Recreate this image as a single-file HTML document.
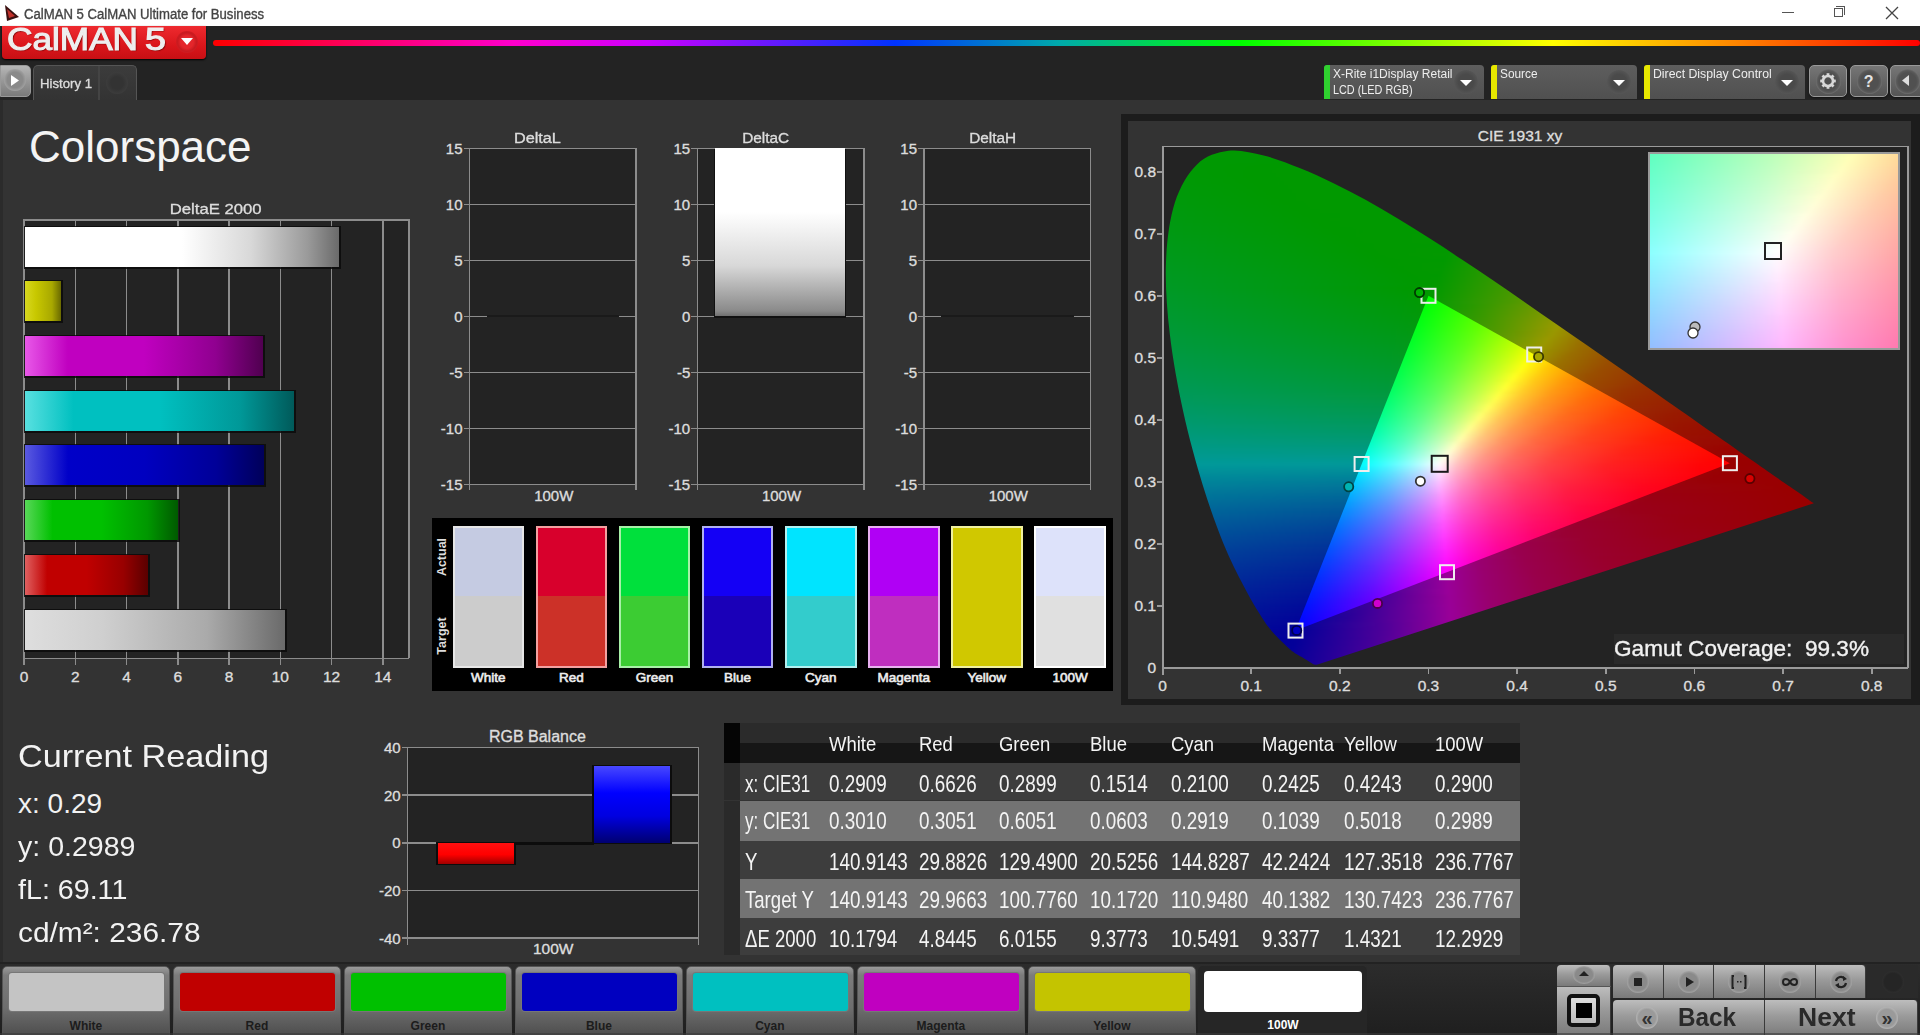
<!DOCTYPE html><html><head><meta charset="utf-8"><style>
*{margin:0;padding:0;box-sizing:border-box}
html,body{width:1920px;height:1035px;overflow:hidden;background:#333;font-family:"Liberation Sans",sans-serif}
.t{position:absolute;white-space:nowrap}
.sb{-webkit-text-stroke:0.35px currentColor}
.sb2{-webkit-text-stroke:0.6px currentColor}
.b{position:absolute}
.rows i{position:absolute;left:0;height:3px;width:100%;display:block}
</style></head><body>
<div class="b" style="left:0.0px;top:0.0px;width:1920.0px;height:26.0px;background:#fff"></div><svg class="b" style="left:3px;top:4px" width="17" height="18" viewBox="0 0 17 18"><path d="M2,1 L16,13 L4,17 Z" fill="#3a1010"/><path d="M4,5 L12,12 L6,14 Z" fill="#c0302a"/></svg><div class="t sb" style="left:24.0px;top:6.7px;font-size:14.0px;line-height:14.0px;color:#444;font-weight:400;transform:scaleX(0.938);transform-origin:0 0;">CalMAN 5 CalMAN Ultimate for Business</div><div class="b" style="left:1782.0px;top:12.0px;width:12.0px;height:1.0px;background:#555"></div><div class="b" style="left:1834px;top:8px;width:9px;height:9px;border:1px solid #555"></div><div class="b" style="left:1836px;top:6px;width:9px;height:9px;border-top:1px solid #555;border-right:1px solid #555"></div><svg class="b" style="left:1885px;top:6px" width="14" height="14"><path d="M1,1 L13,13 M13,1 L1,13" stroke="#444" stroke-width="1.3"/></svg><div class="b" style="left:0.0px;top:26.0px;width:1920.0px;height:74.0px;background:#232323"></div><div class="b" style="left:2.0px;top:26.0px;width:204.0px;height:33.0px;background:linear-gradient(#ee2a2f,#d9161b 60%,#c80f14);border-radius:0 0 4px 4px;box-shadow:0 1px 2px #000"></div><div class="t" style="left:7.0px;top:24.4px;font-size:31.8px;line-height:31.8px;color:#eee;font-weight:400;transform:scaleX(1.107);transform-origin:0 0;-webkit-text-stroke:1.1px #eee;text-shadow:1px 1px 1px #700">CalMAN</div><div class="t" style="left:145.0px;top:24.4px;font-size:31.8px;line-height:31.8px;color:#eee;font-weight:400;transform:scaleX(1.187);transform-origin:0 0;-webkit-text-stroke:1.1px #eee;text-shadow:1px 1px 1px #700">5</div><div class="b" style="left:176px;top:31px;width:22px;height:22px;border-radius:50%;background:radial-gradient(#e4262b 40%,#c91a1f 60%,#e02227)"></div><svg class="b" style="left:181px;top:38px" width="12" height="8"><path d="M0,0 L12,0 L6,7Z" fill="#fff"/></svg><div class="b" style="left:213.0px;top:40.0px;width:1707.0px;height:6.0px;background:linear-gradient(90deg,#f00 0px,#f0c 300px,#c0f 435px,#03f 682px,#0aa 847px,#0f0 1027px,#ff0 1340px,#f80 1520px,#f00 1707px);border-radius:3px"></div><div class="b" style="left:0.0px;top:65.0px;width:31.0px;height:32.0px;background:linear-gradient(#b5b5b5,#7a7a7a);border-radius:0 5px 5px 0;border:1px solid #999"></div><div class="b" style="left:4px;top:69px;width:22px;height:22px;border-radius:50%;background:radial-gradient(#8a8a8a 50%,#a0a0a0 70%)"></div><svg class="b" style="left:11px;top:75px" width="8" height="11"><path d="M0,0 L8,5.5 L0,11Z" fill="#fff"/></svg><div class="b" style="left:33.0px;top:65.0px;width:104.0px;height:35.0px;background:linear-gradient(#3c3c3c,#333);border:1px solid #555;border-bottom:none;border-radius:5px 5px 0 0"></div><div class="b" style="left:98.0px;top:66.0px;width:2.0px;height:34.0px;background:#444"></div><div class="t sb" style="left:40.0px;top:76.6px;font-size:13.5px;line-height:13.5px;color:#ddd;font-weight:400;transform:scaleX(0.976);transform-origin:0 0;">History 1</div><div class="b" style="left:106px;top:72px;width:22px;height:22px;border-radius:50%;background:radial-gradient(#333 40%,#3c3c3c 70%)"></div><div class="b" style="left:1324.0px;top:65.0px;width:160.0px;height:34.0px;background:linear-gradient(#5e5e5e,#505050);border-radius:4px 4px 0 0"></div><div class="b" style="left:1324.0px;top:65.0px;width:6.0px;height:34.0px;background:#2fd02f;border-radius:3px 0 0 0"></div><div class="t" style="left:1333.0px;top:67.8px;font-size:12.5px;line-height:12.5px;color:#eee;font-weight:400;transform:scaleX(0.961);transform-origin:0 0;">X-Rite i1Display Retail</div><div class="t" style="left:1333.0px;top:83.9px;font-size:12.5px;line-height:12.5px;color:#eee;font-weight:400;transform:scaleX(0.867);transform-origin:0 0;">LCD (LED RGB)</div><div class="b" style="left:1454px;top:70px;width:24px;height:24px;border-radius:50%;background:radial-gradient(#4a4a4a 45%,#555 70%,#5a5a5a)"></div><svg class="b" style="left:1460px;top:80px" width="12" height="7"><path d="M0,0 L12,0 L6,6Z" fill="#fff"/></svg><div class="b" style="left:1491.0px;top:65.0px;width:146.0px;height:34.0px;background:linear-gradient(#5e5e5e,#505050);border-radius:4px 4px 0 0"></div><div class="b" style="left:1491.0px;top:65.0px;width:6.0px;height:34.0px;background:#e8e800;border-radius:3px 0 0 0"></div><div class="t" style="left:1500.0px;top:67.8px;font-size:12.5px;line-height:12.5px;color:#eee;font-weight:400;transform:scaleX(0.947);transform-origin:0 0;">Source</div><div class="b" style="left:1607px;top:70px;width:24px;height:24px;border-radius:50%;background:radial-gradient(#4a4a4a 45%,#555 70%,#5a5a5a)"></div><svg class="b" style="left:1613px;top:80px" width="12" height="7"><path d="M0,0 L12,0 L6,6Z" fill="#fff"/></svg><div class="b" style="left:1644.0px;top:65.0px;width:161.0px;height:34.0px;background:linear-gradient(#5e5e5e,#505050);border-radius:4px 4px 0 0"></div><div class="b" style="left:1644.0px;top:65.0px;width:6.0px;height:34.0px;background:#e8e800;border-radius:3px 0 0 0"></div><div class="t" style="left:1653.0px;top:67.8px;font-size:12.5px;line-height:12.5px;color:#eee;font-weight:400;transform:scaleX(0.982);transform-origin:0 0;">Direct Display Control</div><div class="b" style="left:1775px;top:70px;width:24px;height:24px;border-radius:50%;background:radial-gradient(#4a4a4a 45%,#555 70%,#5a5a5a)"></div><svg class="b" style="left:1781px;top:80px" width="12" height="7"><path d="M0,0 L12,0 L6,6Z" fill="#fff"/></svg><div class="b" style="left:1809.0px;top:65.0px;width:38.0px;height:32.0px;background:linear-gradient(#767676,#555);border-radius:5px;border:1.5px solid #999;box-shadow:0 1px 2px #111"></div><div class="b" style="left:1815.5px;top:69px;width:25px;height:25px;border-radius:50%;background:radial-gradient(#505050 50%,#5a5a5a 62%,#7a7a7a 75%,rgba(120,120,120,0) 80%)"></div><div class="b" style="left:1850.0px;top:65.0px;width:38.0px;height:32.0px;background:linear-gradient(#767676,#555);border-radius:5px;border:1.5px solid #999;box-shadow:0 1px 2px #111"></div><div class="b" style="left:1856.5px;top:69px;width:25px;height:25px;border-radius:50%;background:radial-gradient(#505050 50%,#5a5a5a 62%,#7a7a7a 75%,rgba(120,120,120,0) 80%)"></div><div class="b" style="left:1890.0px;top:65.0px;width:35.0px;height:32.0px;background:linear-gradient(#767676,#555);border-radius:5px;border:1.5px solid #999;box-shadow:0 1px 2px #111"></div><div class="b" style="left:1895.0px;top:69px;width:25px;height:25px;border-radius:50%;background:radial-gradient(#505050 50%,#5a5a5a 62%,#7a7a7a 75%,rgba(120,120,120,0) 80%)"></div><svg class="b" style="left:1816px;top:69px" width="24" height="24" viewBox="-12 -12 24 24"><g fill="#d8d8d8"><rect x="-1.4" y="-7.8" width="2.8" height="3.5" transform="rotate(0)"/><rect x="-1.4" y="-7.8" width="2.8" height="3.5" transform="rotate(45)"/><rect x="-1.4" y="-7.8" width="2.8" height="3.5" transform="rotate(90)"/><rect x="-1.4" y="-7.8" width="2.8" height="3.5" transform="rotate(135)"/><rect x="-1.4" y="-7.8" width="2.8" height="3.5" transform="rotate(180)"/><rect x="-1.4" y="-7.8" width="2.8" height="3.5" transform="rotate(225)"/><rect x="-1.4" y="-7.8" width="2.8" height="3.5" transform="rotate(270)"/><rect x="-1.4" y="-7.8" width="2.8" height="3.5" transform="rotate(315)"/></g><circle r="5" fill="none" stroke="#d8d8d8" stroke-width="2.6"/></svg><div class="t" style="left:1863.7px;top:74.0px;font-size:16.0px;line-height:16.0px;color:#e4e4e4;font-weight:700;">?</div><svg class="b" style="left:1902px;top:74.5px" width="7" height="12"><path d="M7,0 L0,5.5 L7,11Z" fill="#ddd"/></svg><div class="b" style="left:0.0px;top:100.0px;width:1920.0px;height:863.0px;background:#333"></div><div class="b" style="left:0.0px;top:100.0px;width:3.0px;height:863.0px;background:#2b2b2b"></div><div class="t" style="left:29.0px;top:125.1px;font-size:44.0px;line-height:44.0px;color:#f4f4f4;font-weight:400;">Colorspace</div><div class="t sb" style="left:173.3px;top:201.4px;font-size:15.5px;line-height:15.5px;color:#ddd;font-weight:400;transform:scaleX(1.078);transform-origin:50% 0;">DeltaE 2000</div><div class="b" style="left:24.0px;top:220.0px;width:384.8px;height:438.5px;background:#232323"></div><div class="b" style="left:23.2px;top:220.0px;width:1.5px;height:444.5px;background:#8c8c8c"></div><div class="t sb" style="left:19.7px;top:668.7px;font-size:15.5px;line-height:15.5px;color:#ddd;font-weight:400;">0</div><div class="b" style="left:74.5px;top:220.0px;width:1.5px;height:444.5px;background:#8c8c8c"></div><div class="t sb" style="left:70.9px;top:668.7px;font-size:15.5px;line-height:15.5px;color:#ddd;font-weight:400;">2</div><div class="b" style="left:125.8px;top:220.0px;width:1.5px;height:444.5px;background:#8c8c8c"></div><div class="t sb" style="left:122.2px;top:668.7px;font-size:15.5px;line-height:15.5px;color:#ddd;font-weight:400;">4</div><div class="b" style="left:177.0px;top:220.0px;width:1.5px;height:444.5px;background:#8c8c8c"></div><div class="t sb" style="left:173.5px;top:668.7px;font-size:15.5px;line-height:15.5px;color:#ddd;font-weight:400;">6</div><div class="b" style="left:228.3px;top:220.0px;width:1.5px;height:444.5px;background:#8c8c8c"></div><div class="t sb" style="left:224.7px;top:668.7px;font-size:15.5px;line-height:15.5px;color:#ddd;font-weight:400;">8</div><div class="b" style="left:279.5px;top:220.0px;width:1.5px;height:444.5px;background:#8c8c8c"></div><div class="t sb" style="left:271.7px;top:668.7px;font-size:15.5px;line-height:15.5px;color:#ddd;font-weight:400;">10</div><div class="b" style="left:330.8px;top:220.0px;width:1.5px;height:444.5px;background:#8c8c8c"></div><div class="t sb" style="left:322.9px;top:668.7px;font-size:15.5px;line-height:15.5px;color:#ddd;font-weight:400;">12</div><div class="b" style="left:382.1px;top:220.0px;width:1.5px;height:444.5px;background:#8c8c8c"></div><div class="t sb" style="left:374.2px;top:668.7px;font-size:15.5px;line-height:15.5px;color:#ddd;font-weight:400;">14</div><div class="b" style="left:23.2px;top:219.2px;width:386.3px;height:1.5px;background:#8c8c8c"></div><div class="b" style="left:408.1px;top:219.2px;width:1.5px;height:439.2px;background:#8c8c8c"></div><div class="b" style="left:23.2px;top:657.8px;width:386.3px;height:1.5px;background:#8c8c8c"></div><div class="b" style="left:24.0px;top:225.5px;width:317.0px;height:43.0px;background:#0a0a0a;opacity:.85"></div><div class="b" style="left:24.8px;top:227.0px;width:314.3px;height:40.0px;background:linear-gradient(90deg,#fff 0%,#fff 50%,#d8d8d8 72%,#9a9a9a 90%,#6a6a6a 100%)"></div><div class="b" style="left:24.0px;top:279.5px;width:38.7px;height:43.0px;background:#0a0a0a;opacity:.85"></div><div class="b" style="left:24.8px;top:281.0px;width:36.0px;height:40.0px;background:linear-gradient(90deg,#d8d820 0%,#c8c800 30%,#a8a800 75%,#6a6a00 100%)"></div><div class="b" style="left:24.0px;top:334.5px;width:241.3px;height:43.0px;background:#0a0a0a;opacity:.85"></div><div class="b" style="left:24.8px;top:336.0px;width:238.6px;height:40.0px;background:linear-gradient(90deg,#e858e8 0%,#c000c0 18%,#c000c0 50%,#900090 80%,#500050 100%)"></div><div class="b" style="left:24.0px;top:389.5px;width:272.4px;height:43.0px;background:#0a0a0a;opacity:.85"></div><div class="b" style="left:24.8px;top:391.0px;width:269.6px;height:40.0px;background:linear-gradient(90deg,#58e0e0 0%,#00c0c0 18%,#00c0c0 50%,#009898 80%,#005a5a 100%)"></div><div class="b" style="left:24.0px;top:443.5px;width:242.3px;height:43.0px;background:#0a0a0a;opacity:.85"></div><div class="b" style="left:24.8px;top:445.0px;width:239.6px;height:40.0px;background:linear-gradient(90deg,#5a5ae0 0%,#0000c8 18%,#0000c0 50%,#000098 80%,#00005a 100%)"></div><div class="b" style="left:24.0px;top:498.5px;width:156.2px;height:43.0px;background:#0a0a0a;opacity:.85"></div><div class="b" style="left:24.8px;top:500.0px;width:153.4px;height:40.0px;background:linear-gradient(90deg,#58d858 0%,#00c000 18%,#00c000 50%,#009800 80%,#005a00 100%)"></div><div class="b" style="left:24.0px;top:553.5px;width:126.2px;height:43.0px;background:#0a0a0a;opacity:.85"></div><div class="b" style="left:24.8px;top:555.0px;width:123.4px;height:40.0px;background:linear-gradient(90deg,#e06060 0%,#c00000 18%,#c00000 50%,#980000 80%,#5a0000 100%)"></div><div class="b" style="left:24.0px;top:608.5px;width:262.9px;height:43.0px;background:#0a0a0a;opacity:.85"></div><div class="b" style="left:24.8px;top:610.0px;width:260.1px;height:40.0px;background:linear-gradient(90deg,#dedede 0%,#cfcfcf 30%,#aaaaaa 70%,#6a6a6a 100%)"></div><div class="t sb" style="left:515.3px;top:130.1px;font-size:15.5px;line-height:15.5px;color:#ddd;font-weight:400;transform:scaleX(1.049);transform-origin:50% 0;">DeltaL</div><div class="b" style="left:469.5px;top:148.3px;width:166.5px;height:336.2px;background:#232323"></div><div class="b" style="left:463.5px;top:147.6px;width:172.5px;height:1.5px;background:#8c8c8c"></div><div class="t sb" style="left:445.8px;top:140.8px;font-size:15.0px;line-height:15.0px;color:#ddd;font-weight:400;">15</div><div class="b" style="left:463.5px;top:203.6px;width:172.5px;height:1.5px;background:#8c8c8c"></div><div class="t sb" style="left:445.8px;top:196.8px;font-size:15.0px;line-height:15.0px;color:#ddd;font-weight:400;">10</div><div class="b" style="left:463.5px;top:259.6px;width:172.5px;height:1.5px;background:#8c8c8c"></div><div class="t sb" style="left:454.2px;top:252.9px;font-size:15.0px;line-height:15.0px;color:#ddd;font-weight:400;">5</div><div class="b" style="left:463.5px;top:315.6px;width:172.5px;height:1.5px;background:#8c8c8c"></div><div class="t sb" style="left:454.2px;top:308.9px;font-size:15.0px;line-height:15.0px;color:#ddd;font-weight:400;">0</div><div class="b" style="left:463.5px;top:371.7px;width:172.5px;height:1.5px;background:#8c8c8c"></div><div class="t sb" style="left:449.2px;top:364.9px;font-size:15.0px;line-height:15.0px;color:#ddd;font-weight:400;">-5</div><div class="b" style="left:463.5px;top:427.7px;width:172.5px;height:1.5px;background:#8c8c8c"></div><div class="t sb" style="left:440.8px;top:421.0px;font-size:15.0px;line-height:15.0px;color:#ddd;font-weight:400;">-10</div><div class="b" style="left:463.5px;top:483.8px;width:172.5px;height:1.5px;background:#8c8c8c"></div><div class="t sb" style="left:440.8px;top:477.0px;font-size:15.0px;line-height:15.0px;color:#ddd;font-weight:400;">-15</div><div class="b" style="left:468.8px;top:147.6px;width:1.5px;height:342.9px;background:#8c8c8c"></div><div class="b" style="left:635.2px;top:147.6px;width:1.5px;height:342.9px;background:#8c8c8c"></div><div class="t sb" style="left:534.2px;top:487.8px;font-size:15.0px;line-height:15.0px;color:#ddd;font-weight:400;">100W</div><div class="b" style="left:486.5px;top:315.4px;width:132.5px;height:2.0px;background:#1a1a1a"></div><div class="t sb" style="left:741.8px;top:130.1px;font-size:15.5px;line-height:15.5px;color:#ddd;font-weight:400;transform:scaleX(0.992);transform-origin:50% 0;">DeltaC</div><div class="b" style="left:697.2px;top:148.3px;width:166.5px;height:336.2px;background:#232323"></div><div class="b" style="left:691.2px;top:147.6px;width:172.5px;height:1.5px;background:#8c8c8c"></div><div class="t sb" style="left:673.5px;top:140.8px;font-size:15.0px;line-height:15.0px;color:#ddd;font-weight:400;">15</div><div class="b" style="left:691.2px;top:203.6px;width:172.5px;height:1.5px;background:#8c8c8c"></div><div class="t sb" style="left:673.5px;top:196.8px;font-size:15.0px;line-height:15.0px;color:#ddd;font-weight:400;">10</div><div class="b" style="left:691.2px;top:259.6px;width:172.5px;height:1.5px;background:#8c8c8c"></div><div class="t sb" style="left:681.9px;top:252.9px;font-size:15.0px;line-height:15.0px;color:#ddd;font-weight:400;">5</div><div class="b" style="left:691.2px;top:315.6px;width:172.5px;height:1.5px;background:#8c8c8c"></div><div class="t sb" style="left:681.9px;top:308.9px;font-size:15.0px;line-height:15.0px;color:#ddd;font-weight:400;">0</div><div class="b" style="left:691.2px;top:371.7px;width:172.5px;height:1.5px;background:#8c8c8c"></div><div class="t sb" style="left:676.9px;top:364.9px;font-size:15.0px;line-height:15.0px;color:#ddd;font-weight:400;">-5</div><div class="b" style="left:691.2px;top:427.7px;width:172.5px;height:1.5px;background:#8c8c8c"></div><div class="t sb" style="left:668.5px;top:421.0px;font-size:15.0px;line-height:15.0px;color:#ddd;font-weight:400;">-10</div><div class="b" style="left:691.2px;top:483.8px;width:172.5px;height:1.5px;background:#8c8c8c"></div><div class="t sb" style="left:668.5px;top:477.0px;font-size:15.0px;line-height:15.0px;color:#ddd;font-weight:400;">-15</div><div class="b" style="left:696.5px;top:147.6px;width:1.5px;height:342.9px;background:#8c8c8c"></div><div class="b" style="left:863.0px;top:147.6px;width:1.5px;height:342.9px;background:#8c8c8c"></div><div class="t sb" style="left:761.9px;top:487.8px;font-size:15.0px;line-height:15.0px;color:#ddd;font-weight:400;">100W</div><div class="b" style="left:714.2px;top:148.8px;width:132.0px;height:169.1px;background:#111"></div><div class="b" style="left:714.7px;top:148.3px;width:130.5px;height:168.1px;background:linear-gradient(#fff 0%,#fff 38%,#d8d8d8 70%,#8a8a8a 97%,#707070 100%)"></div><div class="t sb" style="left:968.6px;top:130.1px;font-size:15.5px;line-height:15.5px;color:#ddd;font-weight:400;transform:scaleX(0.992);transform-origin:50% 0;">DeltaH</div><div class="b" style="left:924.0px;top:148.3px;width:166.5px;height:336.2px;background:#232323"></div><div class="b" style="left:918.0px;top:147.6px;width:172.5px;height:1.5px;background:#8c8c8c"></div><div class="t sb" style="left:900.3px;top:140.8px;font-size:15.0px;line-height:15.0px;color:#ddd;font-weight:400;">15</div><div class="b" style="left:918.0px;top:203.6px;width:172.5px;height:1.5px;background:#8c8c8c"></div><div class="t sb" style="left:900.3px;top:196.8px;font-size:15.0px;line-height:15.0px;color:#ddd;font-weight:400;">10</div><div class="b" style="left:918.0px;top:259.6px;width:172.5px;height:1.5px;background:#8c8c8c"></div><div class="t sb" style="left:908.7px;top:252.9px;font-size:15.0px;line-height:15.0px;color:#ddd;font-weight:400;">5</div><div class="b" style="left:918.0px;top:315.6px;width:172.5px;height:1.5px;background:#8c8c8c"></div><div class="t sb" style="left:908.7px;top:308.9px;font-size:15.0px;line-height:15.0px;color:#ddd;font-weight:400;">0</div><div class="b" style="left:918.0px;top:371.7px;width:172.5px;height:1.5px;background:#8c8c8c"></div><div class="t sb" style="left:903.7px;top:364.9px;font-size:15.0px;line-height:15.0px;color:#ddd;font-weight:400;">-5</div><div class="b" style="left:918.0px;top:427.7px;width:172.5px;height:1.5px;background:#8c8c8c"></div><div class="t sb" style="left:895.3px;top:421.0px;font-size:15.0px;line-height:15.0px;color:#ddd;font-weight:400;">-10</div><div class="b" style="left:918.0px;top:483.8px;width:172.5px;height:1.5px;background:#8c8c8c"></div><div class="t sb" style="left:895.3px;top:477.0px;font-size:15.0px;line-height:15.0px;color:#ddd;font-weight:400;">-15</div><div class="b" style="left:923.2px;top:147.6px;width:1.5px;height:342.9px;background:#8c8c8c"></div><div class="b" style="left:1089.8px;top:147.6px;width:1.5px;height:342.9px;background:#8c8c8c"></div><div class="t sb" style="left:988.7px;top:487.8px;font-size:15.0px;line-height:15.0px;color:#ddd;font-weight:400;">100W</div><div class="b" style="left:941.0px;top:315.4px;width:132.5px;height:2.0px;background:#1a1a1a"></div><div class="b" style="left:432.3px;top:518.3px;width:681.0px;height:172.7px;background:#000"></div><div class="t" style="left:435.4px;top:577px;font-size:12.5px;line-height:14px;color:#ddd;font-weight:700;transform:rotate(-90deg);transform-origin:0 0;width:40px;text-align:center;">Actual</div><div class="t" style="left:435.4px;top:656px;font-size:12.5px;line-height:14px;color:#ddd;font-weight:700;transform:rotate(-90deg);transform-origin:0 0;width:40px;text-align:center;">Target</div><div class="b" style="left:452.5px;top:526.2px;width:71.7px;height:141.4px;background:linear-gradient(#c5cbe2 0,#c5cbe2 49.5%,#cccccc 49.5%,#cccccc 100%);border:2px solid #e6e6e6"></div><div class="t sb2" style="left:471.0px;top:671.2px;font-size:13.5px;line-height:13.5px;color:#eee;font-weight:400;">White</div><div class="b" style="left:535.6px;top:526.2px;width:71.7px;height:141.4px;background:linear-gradient(#d8002c 0,#d8002c 49.5%,#cc3128 49.5%,#cc3128 100%);border:2px solid #f2a0a0"></div><div class="t sb2" style="left:559.0px;top:671.2px;font-size:13.5px;line-height:13.5px;color:#eee;font-weight:400;">Red</div><div class="b" style="left:618.7px;top:526.2px;width:71.7px;height:141.4px;background:linear-gradient(#00e03c 0,#00e03c 49.5%,#3ccc33 49.5%,#3ccc33 100%);border:2px solid #a8f0a8"></div><div class="t sb2" style="left:635.7px;top:671.2px;font-size:13.5px;line-height:13.5px;color:#eee;font-weight:400;">Green</div><div class="b" style="left:701.8px;top:526.2px;width:71.7px;height:141.4px;background:linear-gradient(#1400f5 0,#1400f5 49.5%,#1a00b8 49.5%,#1a00b8 100%);border:2px solid #b0b0f0"></div><div class="t sb2" style="left:724.1px;top:671.2px;font-size:13.5px;line-height:13.5px;color:#eee;font-weight:400;">Blue</div><div class="b" style="left:784.9px;top:526.2px;width:71.7px;height:141.4px;background:linear-gradient(#00e4ff 0,#00e4ff 49.5%,#33cccc 49.5%,#33cccc 100%);border:2px solid #b0f0f0"></div><div class="t sb2" style="left:804.9px;top:671.2px;font-size:13.5px;line-height:13.5px;color:#eee;font-weight:400;">Cyan</div><div class="b" style="left:868.0px;top:526.2px;width:71.7px;height:141.4px;background:linear-gradient(#b000f5 0,#b000f5 49.5%,#bf2ebf 49.5%,#bf2ebf 100%);border:2px solid #e8b0f0"></div><div class="t sb2" style="left:877.5px;top:671.2px;font-size:13.5px;line-height:13.5px;color:#eee;font-weight:400;">Magenta</div><div class="b" style="left:951.1px;top:526.2px;width:71.7px;height:141.4px;background:linear-gradient(#d0c800 0,#d0c800 49.5%,#d0c800 49.5%,#d0c800 100%);border:2px solid #f0f0a0"></div><div class="t sb2" style="left:967.6px;top:671.2px;font-size:13.5px;line-height:13.5px;color:#eee;font-weight:400;">Yellow</div><div class="b" style="left:1034.2px;top:526.2px;width:71.7px;height:141.4px;background:linear-gradient(#dde2fa 0,#dde2fa 49.5%,#e0e0e0 49.5%,#e0e0e0 100%);border:2px solid #ffffff"></div><div class="t sb2" style="left:1052.4px;top:671.2px;font-size:13.5px;line-height:13.5px;color:#eee;font-weight:400;">100W</div><div class="b" style="left:1121.0px;top:114.0px;width:799.0px;height:591.0px;background:#1c1c1c"></div><div class="b" style="left:1128.0px;top:121.0px;width:783.0px;height:577.5px;background:#333"></div><div class="t sb" style="left:1477.8px;top:127.9px;font-size:15.5px;line-height:15.5px;color:#ddd;font-weight:400;">CIE 1931 xy</div><div class="b" style="left:1163.0px;top:146.6px;width:744.8px;height:521.2px;background:#232323"></div><div class="b" style="left:1160px;top:145px;width:660px;height:525px;clip-path:path('M156.8,519.7 C156.7,519.7 156.5,519.8 156.1,519.8 C155.7,519.8 155.1,519.9 154.4,519.6 C153.8,519.4 153.3,519.1 152.2,518.5 C151.2,517.9 150.1,517.2 148.2,516.0 C146.4,514.9 144.3,513.8 141.3,511.8 C138.3,509.9 135.0,508.5 130.2,504.4 C125.4,500.2 117.6,492.9 112.5,487.0 C107.4,481.1 104.5,476.7 99.7,469.0 C94.8,461.2 89.5,452.3 83.4,440.5 C77.4,428.8 70.2,415.1 63.4,398.4 C56.6,381.6 49.4,361.8 42.7,339.9 C36.1,318.0 28.8,292.1 23.3,266.9 C17.8,241.8 12.7,214.0 9.8,189.0 C6.9,164.0 5.1,138.7 6.0,116.8 C6.8,94.9 9.7,73.9 14.8,57.7 C20.0,41.4 28.1,28.0 37.0,19.4 C45.9,10.7 57.2,7.3 68.4,5.8 C79.5,4.4 91.9,7.7 103.7,10.6 C115.6,13.4 128.0,18.5 139.6,23.1 C151.3,27.8 162.4,32.9 173.5,38.2 C184.6,43.5 195.3,49.2 206.0,55.1 C216.8,61.1 227.5,67.3 238.1,73.7 C248.8,80.1 259.3,86.8 269.9,93.6 C280.4,100.3 291.0,107.3 301.5,114.3 C312.1,121.3 322.7,128.4 333.3,135.6 C343.8,142.8 354.3,150.0 364.8,157.2 C375.3,164.5 385.8,171.7 396.2,178.9 C406.6,186.1 416.9,193.2 427.0,200.3 C437.1,207.3 447.1,214.3 456.8,221.1 C466.6,227.9 476.2,234.6 485.5,241.1 C494.7,247.5 503.8,253.8 512.4,259.8 C521.0,265.8 529.3,271.6 537.0,277.0 C544.6,282.3 551.6,287.2 558.3,291.8 C565.0,296.5 571.4,301.0 577.1,304.9 C582.9,308.9 586.3,311.3 592.7,315.7 C599.1,320.2 609.3,327.3 615.5,331.7 C621.7,336.0 626.0,338.9 630.1,341.8 C634.1,344.6 637.2,346.8 639.9,348.6 C642.6,350.5 644.5,351.8 646.1,352.9 C647.7,354.0 648.6,354.6 649.6,355.4 C650.7,356.2 652.0,357.0 652.7,357.5 C653.4,358.0 653.6,358.2 653.8,358.3Z')"><div class="b rows" style="left:0;top:0;width:660px;height:525px;filter:blur(1.5px)"><i style="top:-3px;background:linear-gradient(90deg,#009900 0px,#029900 332px,#4f9900 460px,#999800 558px,#996f00 620px,#995d00 658px,#995d00 659px)"></i><i style="top:0px;background:linear-gradient(90deg,#009900 0px,#019900 330px,#4f9900 458px,#999700 556px,#996e00 618px,#995c00 658px,#995b00 659px)"></i><i style="top:3px;background:linear-gradient(90deg,#009900 0px,#029900 330px,#4f9900 456px,#999700 554px,#996d00 616px,#995a00 658px,#995a00 659px)"></i><i style="top:6px;background:linear-gradient(90deg,#009901 0px,#029900 328px,#4f9900 454px,#999800 550px,#996f00 610px,#995900 658px,#995900 659px)"></i><i style="top:9px;background:linear-gradient(90deg,#009902 0px,#029900 328px,#4f9900 452px,#999700 548px,#996f00 608px,#995800 658px,#995700 659px)"></i><i style="top:12px;background:linear-gradient(90deg,#009902 0px,#029900 326px,#4f9900 450px,#999700 546px,#996e00 606px,#995700 658px,#995600 659px)"></i><i style="top:15px;background:linear-gradient(90deg,#009903 0px,#009900 182px,#019900 324px,#4f9900 448px,#999800 542px,#996f00 602px,#995500 658px,#995500 659px)"></i><i style="top:18px;background:linear-gradient(90deg,#009904 0px,#009900 106px,#029900 324px,#4f9900 446px,#999700 540px,#996e00 600px,#995400 658px,#995400 659px)"></i><i style="top:21px;background:linear-gradient(90deg,#009904 0px,#009900 90px,#029900 322px,#4f9900 444px,#999700 538px,#996d00 598px,#995300 658px,#995200 659px)"></i><i style="top:24px;background:linear-gradient(90deg,#009905 0px,#009900 88px,#029900 322px,#4f9900 442px,#999800 534px,#996f00 592px,#995200 658px,#995100 659px)"></i><i style="top:27px;background:linear-gradient(90deg,#009905 0px,#009900 88px,#029900 320px,#4f9900 440px,#999700 532px,#996f00 590px,#995000 658px,#995000 659px)"></i><i style="top:30px;background:linear-gradient(90deg,#009906 0px,#009900 88px,#029900 318px,#4f9900 438px,#999700 530px,#996e00 588px,#994f00 658px,#994f00 659px)"></i><i style="top:33px;background:linear-gradient(90deg,#009907 0px,#009900 92px,#029900 318px,#4f9900 436px,#999800 526px,#997000 582px,#994e00 658px,#994e00 659px)"></i><i style="top:36px;background:linear-gradient(90deg,#009907 0px,#009900 96px,#029900 316px,#4f9900 434px,#999800 524px,#996f00 580px,#994d00 658px,#994c00 659px)"></i><i style="top:39px;background:linear-gradient(90deg,#009908 0px,#009900 100px,#029900 316px,#4f9900 432px,#999700 522px,#996f00 578px,#994c00 658px,#994b00 659px)"></i><i style="top:42px;background:linear-gradient(90deg,#009909 0px,#009900 104px,#029900 314px,#4f9900 430px,#999700 520px,#996e00 576px,#994a00 658px,#994a00 659px)"></i><i style="top:45px;background:linear-gradient(90deg,#00990a 0px,#009900 108px,#029900 312px,#4f9900 428px,#999800 516px,#996f00 572px,#994a00 654px,#994900 659px)"></i><i style="top:48px;background:linear-gradient(90deg,#00990a 0px,#009900 112px,#029900 312px,#4f9900 426px,#999700 514px,#996e00 570px,#994a00 652px,#994800 659px)"></i><i style="top:51px;background:linear-gradient(90deg,#00990b 0px,#009900 116px,#029900 310px,#4f9900 424px,#999700 512px,#996d00 568px,#994900 650px,#994700 658px,#994600 659px)"></i><i style="top:54px;background:linear-gradient(90deg,#00990c 0px,#009900 122px,#039900 310px,#4f9900 422px,#999800 508px,#996f00 562px,#994b00 642px,#994600 658px,#994500 659px)"></i><i style="top:57px;background:linear-gradient(90deg,#00990c 0px,#009900 126px,#029900 308px,#4f9900 420px,#999700 506px,#996f00 560px,#994a00 640px,#994500 658px,#994400 659px)"></i><i style="top:60px;background:linear-gradient(90deg,#00990d 0px,#009900 132px,#029900 306px,#4f9900 418px,#999700 504px,#996e00 558px,#994a00 638px,#994300 658px,#994300 659px)"></i><i style="top:63px;background:linear-gradient(90deg,#00990e 0px,#009900 136px,#029900 306px,#4f9900 416px,#999800 500px,#997000 552px,#994b00 630px,#994200 658px,#994200 659px)"></i><i style="top:66px;background:linear-gradient(90deg,#00990f 0px,#009900 142px,#029900 304px,#4f9900 414px,#999800 498px,#996f00 550px,#994b00 628px,#994100 658px,#994100 659px)"></i><i style="top:69px;background:linear-gradient(90deg,#00990f 0px,#009900 146px,#019900 302px,#4e9900 410px,#999700 496px,#996f00 548px,#994a00 626px,#994000 658px,#994000 659px)"></i><i style="top:72px;background:linear-gradient(90deg,#009910 0px,#009900 152px,#029900 302px,#4f9900 410px,#999600 494px,#996e00 546px,#994a00 624px,#993f00 658px,#993f00 659px)"></i><i style="top:75px;background:linear-gradient(90deg,#009911 0px,#009900 156px,#029900 300px,#4f9900 408px,#999800 490px,#996f00 542px,#994b00 618px,#993e00 658px,#993e00 659px)"></i><i style="top:78px;background:linear-gradient(90deg,#009912 0px,#009900 162px,#029900 300px,#4f9900 406px,#999700 488px,#996e00 540px,#994a00 616px,#993d00 658px,#993c00 659px)"></i><i style="top:81px;background:linear-gradient(90deg,#009913 0px,#009900 166px,#029900 298px,#4f9900 404px,#999700 486px,#996d00 538px,#994a00 614px,#993c00 658px,#993b00 659px)"></i><i style="top:84px;background:linear-gradient(90deg,#009913 0px,#009900 172px,#019900 296px,#4e9900 400px,#999800 482px,#996f00 532px,#994b00 606px,#993b00 658px,#993a00 659px)"></i><i style="top:87px;background:linear-gradient(90deg,#009914 0px,#009900 176px,#029900 296px,#4f9900 400px,#999700 480px,#996f00 530px,#994b00 604px,#993900 658px,#993900 659px)"></i><i style="top:90px;background:linear-gradient(90deg,#009915 0px,#009900 182px,#029900 294px,#4f9900 398px,#999700 478px,#996e00 528px,#994a00 602px,#993800 658px,#993800 659px)"></i><i style="top:93px;background:linear-gradient(90deg,#009916 0px,#009900 188px,#029900 294px,#4f9900 396px,#999800 474px,#996f00 524px,#994b00 596px,#993700 658px,#993700 659px)"></i><i style="top:96px;background:linear-gradient(90deg,#009917 0px,#009900 192px,#029900 292px,#4f9900 394px,#999800 472px,#996e00 522px,#994a00 594px,#993600 658px,#993600 659px)"></i><i style="top:99px;background:linear-gradient(90deg,#009918 0px,#009900 198px,#019900 290px,#4e9900 390px,#999700 470px,#996f00 518px,#994b00 590px,#993500 658px,#993500 659px)"></i><i style="top:102px;background:linear-gradient(90deg,#009919 0px,#009900 202px,#029900 290px,#4f9900 390px,#999800 466px,#996f00 514px,#994b00 584px,#993400 658px,#993400 659px)"></i><i style="top:105px;background:linear-gradient(90deg,#009919 0px,#009900 208px,#029900 288px,#4f9900 388px,#999800 464px,#996f00 512px,#994b00 582px,#993300 658px,#993300 659px)"></i><i style="top:108px;background:linear-gradient(90deg,#00991a 0px,#009900 214px,#039900 288px,#4f9900 386px,#999700 462px,#996e00 510px,#994a00 580px,#993200 658px,#993200 659px)"></i><i style="top:111px;background:linear-gradient(90deg,#00991b 0px,#009900 218px,#029900 286px,#4f9900 384px,#999600 460px,#996d00 508px,#994a00 578px,#993100 658px,#993100 659px)"></i><i style="top:114px;background:linear-gradient(90deg,#00991c 0px,#009900 224px,#019900 284px,#4e9900 380px,#999800 456px,#997000 502px,#994b00 570px,#993000 658px,#993000 659px)"></i><i style="top:117px;background:linear-gradient(90deg,#00991d 0px,#009900 228px,#029900 284px,#4f9900 380px,#999700 454px,#996f00 500px,#994b00 568px,#992f00 658px,#992f00 659px)"></i><i style="top:120px;background:linear-gradient(90deg,#00991e 0px,#009900 234px,#029900 282px,#4f9900 378px,#999700 452px,#996e00 498px,#994a00 566px,#992e00 658px,#992e00 659px)"></i><i style="top:123px;background:linear-gradient(90deg,#00991f 0px,#009900 240px,#039900 282px,#4f9900 376px,#999800 448px,#996f00 494px,#994a00 562px,#992d00 658px,#992d00 659px)"></i><i style="top:126px;background:linear-gradient(90deg,#009920 0px,#009900 244px,#029900 280px,#4f9900 374px,#999700 446px,#996e00 492px,#994b00 558px,#992c00 658px,#992c00 659px)"></i><i style="top:129px;background:linear-gradient(90deg,#009921 0px,#009900 250px,#019900 278px,#4d9900 370px,#999700 444px,#996d00 490px,#994a00 556px,#992b00 658px,#992b00 659px)"></i><i style="top:132px;background:linear-gradient(90deg,#009922 0px,#009900 254px,#029900 278px,#4f9900 370px,#999800 440px,#997000 484px,#994c00 548px,#992c00 648px,#992a00 658px,#992a00 659px)"></i><i style="top:135px;background:linear-gradient(90deg,#009923 0px,#009900 260px,#039900 278px,#4f9900 368px,#999800 438px,#996f00 482px,#994b00 546px,#992c00 646px,#992900 658px,#992900 659px)"></i><i style="top:138px;background:linear-gradient(90deg,#009924 0px,#009900 266px,#069900 280px,#539900 370px,#999700 436px,#996e00 480px,#994b00 544px,#992b00 644px,#992800 658px,#992800 659px)"></i><i style="top:141px;background:linear-gradient(90deg,#009925 0px,#009901 246px,#029900 274px,#4f9900 364px,#999900 432px,#997000 474px,#994c00 536px,#992d00 632px,#992700 658px,#992700 659px)"></i><i style="top:144px;background:linear-gradient(90deg,#009926 0px,#009902 246px,#019900 272px,#4d9900 360px,#999800 430px,#997000 472px,#994c00 534px,#992c00 632px,#992600 658px,#992600 659px)"></i><i style="top:147px;background:linear-gradient(90deg,#009928 0px,#009904 244px,#029900 272px,#4f9900 360px,#999700 428px,#996f00 470px,#994b00 532px,#992c00 630px,#992500 658px,#992500 659px)"></i><i style="top:150px;background:linear-gradient(90deg,#009929 0px,#009905 244px,#029900 270px,#4f9900 358px,#999600 426px,#996e00 468px,#994a00 530px,#992b00 628px,#992400 658px,#992400 659px)"></i><i style="top:153px;background:linear-gradient(90deg,#00992a 0px,#009907 242px,#039901 270px,#4f9900 356px,#999800 422px,#996f00 464px,#994b00 526px,#992b00 622px,#992400 658px,#992300 659px)"></i><i style="top:156px;background:linear-gradient(90deg,#00992b 0px,#009908 242px,#029903 268px,#4f9900 354px,#999700 420px,#996e00 462px,#994a00 524px,#992b00 620px,#992300 658px,#992200 659px)"></i><i style="top:159px;background:linear-gradient(90deg,#00992c 0px,#009909 240px,#029904 266px,#2c9900 316px,#7b9900 392px,#999700 418px,#996d00 460px,#994900 522px,#992a00 618px,#992200 658px,#992100 659px)"></i><i style="top:162px;background:linear-gradient(90deg,#00992d 0px,#00990b 240px,#029905 266px,#2a9900 312px,#799900 388px,#999800 414px,#997000 454px,#994b00 514px,#992c00 606px,#992100 658px,#992100 659px)"></i><i style="top:165px;background:linear-gradient(90deg,#00992f 0px,#00990c 240px,#029907 264px,#2e9900 314px,#7c9900 388px,#999800 412px,#996f00 452px,#994b00 512px,#992b00 604px,#992000 658px,#992000 659px)"></i><i style="top:168px;background:linear-gradient(90deg,#009930 0px,#00990d 238px,#039908 264px,#339900 318px,#849900 392px,#999700 410px,#996e00 450px,#994b00 508px,#992b00 600px,#991f00 658px,#991f00 659px)"></i><i style="top:171px;background:linear-gradient(90deg,#009931 0px,#00990f 238px,#02990a 262px,#399900 322px,#8a9900 394px,#999600 408px,#996e00 448px,#994a00 506px,#992b00 598px,#991e00 658px,#991e00 659px)"></i><i style="top:174px;background:linear-gradient(90deg,#009932 0px,#009910 236px,#02990c 260px,#3f9900 326px,#909900 396px,#999800 404px,#997000 442px,#994c00 498px,#992d00 586px,#991d00 658px,#991d00 659px)"></i><i style="top:177px;background:linear-gradient(90deg,#009934 0px,#009912 236px,#03990d 260px,#459900 330px,#969900 398px,#998f00 408px,#996700 450px,#994400 512px,#992600 610px,#991c00 658px,#991c00 659px)"></i><i style="top:180px;background:linear-gradient(90deg,#009935 0px,#009913 236px,#02990f 258px,#4d9900 336px,#999900 398px,#997000 436px,#994c00 492px,#992c00 578px,#991b00 658px,#991b00 659px)"></i><i style="top:183px;background:linear-gradient(90deg,#009936 0px,#009915 234px,#039910 258px,#4f9900 336px,#999800 396px,#996f00 434px,#994b00 490px,#992c00 576px,#991a00 658px,#991a00 659px)"></i><i style="top:186px;background:linear-gradient(90deg,#009938 0px,#009916 234px,#029912 256px,#4f9900 334px,#999700 394px,#996e00 432px,#994a00 488px,#992b00 574px,#991a00 658px,#991900 659px)"></i><i style="top:189px;background:linear-gradient(90deg,#009939 0px,#009918 234px,#029914 254px,#4f9902 332px,#999700 392px,#996e00 430px,#994900 486px,#992a00 574px,#991900 658px,#991900 659px)"></i><i style="top:192px;background:linear-gradient(90deg,#00993b 0px,#00991a 232px,#039916 254px,#4f9904 330px,#819900 370px,#999800 388px,#997000 424px,#994c00 478px,#992c00 562px,#991800 658px,#991800 659px)"></i><i style="top:195px;background:linear-gradient(90deg,#00993c 0px,#00991b 232px,#029918 252px,#4f9906 328px,#7f9900 366px,#999800 386px,#996f00 422px,#994b00 476px,#992b00 560px,#991700 658px,#991700 659px)"></i><i style="top:198px;background:linear-gradient(90deg,#00993d 0px,#00991d 232px,#039919 252px,#4f9908 326px,#859900 368px,#999700 384px,#996e00 420px,#994a00 474px,#992b00 558px,#991600 658px,#991600 659px)"></i><i style="top:201px;background:linear-gradient(90deg,#00993f 0px,#00991f 232px,#02991b 250px,#4f990a 324px,#8e9900 372px,#999600 382px,#996e00 418px,#994900 472px,#992a00 556px,#991500 658px,#991500 659px)"></i><i style="top:204px;background:linear-gradient(90deg,#009940 0px,#009921 230px,#02991d 248px,#4f990c 322px,#979900 376px,#996b00 418px,#994700 472px,#992900 556px,#991400 658px,#991400 659px)"></i><i style="top:207px;background:linear-gradient(90deg,#009942 0px,#009922 230px,#03991f 248px,#4f990f 320px,#999700 376px,#996f00 410px,#994c00 460px,#992d00 538px,#991400 658px,#991400 659px)"></i><i style="top:210px;background:linear-gradient(90deg,#009944 0px,#009924 230px,#029921 246px,#4f9911 318px,#999902 372px,#997000 406px,#994c00 456px,#992d00 534px,#991300 658px,#991300 659px)"></i><i style="top:213px;background:linear-gradient(90deg,#009945 0px,#009926 230px,#039923 246px,#4f9913 316px,#999804 370px,#997100 402px,#994d00 450px,#992e00 526px,#991300 652px,#991200 659px)"></i><i style="top:216px;background:linear-gradient(90deg,#009947 0px,#009928 228px,#029925 244px,#4f9916 314px,#999706 368px,#997000 400px,#994d00 448px,#992d00 524px,#991200 650px,#991100 658px,#991100 659px)"></i><i style="top:219px;background:linear-gradient(90deg,#009948 0px,#00992a 228px,#029928 242px,#4f9918 312px,#99990a 364px,#996f00 398px,#994c00 446px,#992c00 522px,#991100 650px,#991000 658px,#991000 659px)"></i><i style="top:222px;background:linear-gradient(90deg,#00994a 0px,#00992c 228px,#039929 242px,#4f991b 310px,#99980c 362px,#997001 394px,#994c00 442px,#992d00 516px,#991200 640px,#991000 658px,#990f00 659px)"></i><i style="top:225px;background:linear-gradient(90deg,#00994c 0px,#00992e 228px,#02992c 240px,#4f991d 308px,#99980f 360px,#996f03 392px,#994b00 440px,#992c00 514px,#991200 638px,#990f00 658px,#990f00 659px)"></i><i style="top:228px;background:linear-gradient(90deg,#00994e 0px,#009930 228px,#03992e 240px,#4f9920 306px,#999711 358px,#996f05 390px,#995000 428px,#993000 496px,#991500 610px,#990e00 658px,#990e00 659px)"></i><i style="top:231px;background:linear-gradient(90deg,#00994f 0px,#009932 228px,#039930 238px,#4f9923 304px,#999915 354px,#997008 386px,#994e00 428px,#992e00 498px,#991300 614px,#990d00 658px,#990d00 659px)"></i><i style="top:234px;background:linear-gradient(90deg,#009951 0px,#009934 228px,#049933 238px,#4f9925 302px,#999818 352px,#996f0a 384px,#994b00 430px,#992c00 502px,#991100 624px,#990c00 658px,#990c00 659px)"></i><i style="top:237px;background:linear-gradient(90deg,#009953 0px,#009937 228px,#039935 236px,#4f9928 300px,#99971b 350px,#996e0c 382px,#994a00 428px,#992b00 500px,#991000 622px,#990c00 658px,#990b00 659px)"></i><i style="top:240px;background:linear-gradient(90deg,#009955 0px,#009939 228px,#049938 236px,#52992a 300px,#99991f 346px,#997110 376px,#994d02 420px,#992d00 488px,#991300 602px,#990b00 658px,#990b00 659px)"></i><i style="top:243px;background:linear-gradient(90deg,#009957 0px,#00993b 228px,#0f9939 244px,#5b992c 304px,#999822 344px,#997012 374px,#994c04 418px,#993400 466px,#991800 566px,#990a00 658px,#990a00 659px)"></i><i style="top:246px;background:linear-gradient(90deg,#009959 0px,#00993e 228px,#3a9934 278px,#8a9928 332px,#999724 342px,#996f14 372px,#994b06 416px,#993400 462px,#991800 562px,#990900 658px,#990900 659px)"></i><i style="top:249px;background:linear-gradient(90deg,#00995b 0px,#029940 230px,#509934 292px,#989929 338px,#997017 368px,#994c08 410px,#993200 462px,#991700 562px,#990800 658px,#990800 659px)"></i><i style="top:252px;background:linear-gradient(90deg,#00995d 0px,#019943 228px,#4d9938 288px,#99982c 336px,#99711b 364px,#994d0b 406px,#992f00 466px,#991400 572px,#990800 658px,#990800 659px)"></i><i style="top:255px;background:linear-gradient(90deg,#00995f 0px,#029946 228px,#50993a 288px,#99972f 334px,#99701d 362px,#994c0c 404px,#992c00 470px,#991100 580px,#990700 658px,#990700 659px)"></i><i style="top:258px;background:linear-gradient(90deg,#009961 0px,#019949 226px,#4d993e 284px,#989934 330px,#996f1f 360px,#994b0e 402px,#992b00 468px,#991100 578px,#990600 658px,#990600 659px)"></i><i style="top:261px;background:linear-gradient(90deg,#009964 0px,#00994c 224px,#4d9942 282px,#999937 328px,#997023 356px,#994c11 396px,#992d02 458px,#991300 562px,#990500 658px,#990500 659px)"></i><i style="top:264px;background:linear-gradient(90deg,#009966 0px,#02994f 224px,#509945 282px,#99983b 326px,#996f26 354px,#994b13 394px,#992c03 456px,#991600 538px,#990500 658px,#990400 659px)"></i><i style="top:267px;background:linear-gradient(90deg,#009968 0px,#019952 222px,#4c9949 278px,#99973e 324px,#996e28 352px,#994a15 392px,#992b04 456px,#991a00 514px,#990400 658px,#990400 659px)"></i><i style="top:270px;background:linear-gradient(90deg,#00996b 0px,#029955 222px,#50994c 278px,#999944 320px,#996f2c 348px,#994b18 388px,#992b06 450px,#991a00 508px,#990300 658px,#990300 659px)"></i><i style="top:273px;background:linear-gradient(90deg,#00996d 0px,#019959 220px,#4c9950 274px,#999847 318px,#997030 344px,#994c1b 382px,#992d09 442px,#991900 508px,#990200 658px,#990200 659px)"></i><i style="top:276px;background:linear-gradient(90deg,#00996f 0px,#00995c 218px,#4c9954 272px,#99974b 316px,#996f33 342px,#994b1d 380px,#992c0a 440px,#991600 514px,#990200 658px,#990200 659px)"></i><i style="top:279px;background:linear-gradient(90deg,#009972 0px,#029960 218px,#509958 272px,#989951 312px,#996e36 340px,#994a1f 378px,#992b0c 438px,#991400 518px,#990100 658px,#990100 659px)"></i><i style="top:282px;background:linear-gradient(90deg,#009975 0px,#019963 216px,#4c995d 268px,#999955 310px,#99713c 334px,#994d24 370px,#992e10 426px,#991300 518px,#990000 658px,#990000 659px)"></i><i style="top:285px;background:linear-gradient(90deg,#009977 0px,#009967 214px,#4c9961 266px,#999759 308px,#99703f 332px,#994c26 368px,#992d11 424px,#991200 518px,#990000 658px,#990000 659px)"></i><i style="top:288px;background:linear-gradient(90deg,#00997a 0px,#01996b 214px,#4c9965 264px,#98995f 304px,#996c40 332px,#994827 370px,#992a11 428px,#991000 526px,#990000 658px,#990000 659px)"></i><i style="top:291px;background:linear-gradient(90deg,#00997d 0px,#00996f 212px,#4c996a 262px,#999964 302px,#997047 326px,#994d2d 360px,#992d16 414px,#991303 504px,#990000 646px,#990000 658px,#990000 659px)"></i><i style="top:294px;background:linear-gradient(90deg,#009980 0px,#029973 212px,#50996e 262px,#999869 300px,#996f4a 324px,#994c2f 358px,#992c18 412px,#991204 502px,#990500 584px,#990000 658px,#990000 659px)"></i><i style="top:297px;background:linear-gradient(90deg,#009982 0px,#019978 210px,#4c9973 258px,#97996f 296px,#996b4b 324px,#99472f 360px,#992917 416px,#990f03 512px,#990000 640px,#990000 658px,#990000 659px)"></i><i style="top:300px;background:linear-gradient(90deg,#009985 0px,#00997c 208px,#4c9978 256px,#999975 294px,#996f53 318px,#994b35 352px,#992c1c 404px,#991207 492px,#990500 566px,#990000 652px,#990000 659px)"></i><i style="top:303px;background:linear-gradient(90deg,#009989 0px,#029981 208px,#4c997e 254px,#99987a 292px,#997058 314px,#994d3b 346px,#992e20 396px,#99130a 480px,#990400 566px,#990000 654px,#990000 659px)"></i><i style="top:306px;background:linear-gradient(90deg,#00998c 0px,#009985 206px,#4c9983 252px,#99977e 290px,#996f5c 312px,#994c3d 344px,#992d22 394px,#99120b 478px,#990300 570px,#990000 658px,#990000 659px)"></i><i style="top:309px;background:linear-gradient(90deg,#00998f 0px,#02998a 206px,#509988 252px,#989987 286px,#996e5f 310px,#994a40 342px,#992c24 392px,#99110c 476px,#990200 576px,#990000 658px,#990000 659px)"></i><i style="top:312px;background:linear-gradient(90deg,#009992 0px,#01998f 204px,#4c998e 248px,#99998d 284px,#996f66 306px,#994b44 338px,#992b26 388px,#99110e 472px,#990000 580px,#990000 658px,#990000 659px)"></i><i style="top:315px;background:linear-gradient(90deg,#009996 0px,#009995 202px,#4c9994 246px,#999792 282px,#99716c 302px,#994d4a 332px,#992e2c 378px,#991312 456px,#990000 578px,#990000 658px,#990000 659px)"></i><i style="top:318px;background:linear-gradient(90deg,#009999 0px,#029899 202px,#4f9899 246px,#999697 280px,#996f70 300px,#994c4d 330px,#992d2e 376px,#991213 454px,#990000 576px,#990000 658px,#990000 659px)"></i><i style="top:321px;background:linear-gradient(90deg,#009599 0px,#009399 200px,#4c9299 244px,#998f98 280px,#996b71 300px,#99484e 330px,#992b2f 376px,#991114 454px,#990001 570px,#990000 658px,#990000 659px)"></i><i style="top:324px;background:linear-gradient(90deg,#009299 0px,#028d99 200px,#4d8c99 244px,#998998 280px,#99636f 302px,#99424b 334px,#99252c 384px,#990d11 468px,#990001 570px,#990000 658px,#990000 659px)"></i><i style="top:327px;background:linear-gradient(90deg,#008f99 0px,#018999 198px,#4d8699 244px,#998399 280px,#995f70 302px,#993f4c 334px,#99232d 384px,#990b12 468px,#990003 562px,#990000 658px,#990000 659px)"></i><i style="top:330px;background:linear-gradient(90deg,#008b99 0px,#008499 196px,#4b8199 242px,#997e99 280px,#995b71 302px,#993c4d 334px,#99212e 384px,#990a13 468px,#990004 556px,#990000 646px,#990000 658px,#990000 659px)"></i><i style="top:333px;background:linear-gradient(90deg,#008899 0px,#017f99 196px,#4f7b99 244px,#987899 280px,#99556f 304px,#99374b 338px,#991d2c 390px,#990711 478px,#990005 552px,#990000 640px,#990000 658px,#990000 659px)"></i><i style="top:336px;background:linear-gradient(90deg,#008599 0px,#007a99 194px,#4c7699 242px,#987299 280px,#994f6d 306px,#99334a 340px,#991a2b 394px,#990511 486px,#990005 556px,#990000 644px,#990000 658px,#990000 659px)"></i><i style="top:339px;background:linear-gradient(90deg,#008299 0px,#027699 194px,#4d7199 242px,#986d99 280px,#994b6e 306px,#992f49 342px,#99172a 398px,#990310 492px,#990000 626px,#990000 658px,#990000 659px)"></i><i style="top:342px;background:linear-gradient(90deg,#007e99 0px,#017299 192px,#4d6c99 242px,#996597 282px,#99476e 306px,#992c4a 342px,#99152b 398px,#990211 492px,#990000 630px,#990000 658px,#990000 659px)"></i><i style="top:345px;background:linear-gradient(90deg,#007b99 0px,#026e99 192px,#4e6899 242px,#996097 282px,#99446f 306px,#992a4b 342px,#99142c 398px,#990111 492px,#990000 634px,#990000 658px,#990000 659px)"></i><i style="top:348px;background:linear-gradient(90deg,#007899 0px,#016a99 190px,#4f6399 242px,#995c97 282px,#994070 306px,#99284c 342px,#99122d 398px,#990012 492px,#990000 638px,#990000 658px,#990000 659px)"></i><i style="top:351px;background:linear-gradient(90deg,#007699 0px,#006699 188px,#4c5f99 240px,#995798 282px,#993d71 306px,#99254d 342px,#99102d 398px,#990013 492px,#990000 642px,#990000 658px,#990000 659px)"></i><i style="top:354px;background:linear-gradient(90deg,#007399 0px,#026299 188px,#4d5b99 240px,#995398 282px,#99386f 308px,#99214b 346px,#990d2c 404px,#990014 488px,#990000 644px,#990000 658px,#990000 659px)"></i><i style="top:357px;background:linear-gradient(90deg,#007099 0px,#015e99 186px,#4e5699 240px,#994e99 282px,#993570 308px,#991f4c 346px,#990c2d 404px,#990017 480px,#990000 642px,#990000 658px,#990000 659px)"></i><i style="top:360px;background:linear-gradient(90deg,#006d99 0px,#025b99 186px,#4e5299 240px,#994a99 282px,#993270 308px,#991c4c 346px,#990a2d 406px,#990019 474px,#990002 630px,#990000 658px,#990000 659px)"></i><i style="top:363px;background:linear-gradient(90deg,#006a99 0px,#015799 184px,#4f4e99 240px,#984699 282px,#992d6f 310px,#99194a 350px,#99072b 412px,#99001a 470px,#990003 622px,#990000 658px,#990000 659px)"></i><i style="top:366px;background:linear-gradient(90deg,#006899 0px,#005499 182px,#4c4b99 238px,#984199 282px,#99296d 312px,#99164a 352px,#99052a 416px,#99001a 474px,#990003 630px,#990000 658px,#990000 659px)"></i><i style="top:369px;background:linear-gradient(90deg,#006599 0px,#025199 182px,#4d4799 238px,#993c97 284px,#99266e 312px,#99144b 352px,#99032b 416px,#990014 506px,#990000 658px,#990000 659px)"></i><i style="top:372px;background:linear-gradient(90deg,#006299 0px,#014e99 180px,#4e4399 238px,#993897 284px,#99246e 312px,#99124b 352px,#99022c 416px,#990011 524px,#990001 658px,#990001 659px)"></i><i style="top:375px;background:linear-gradient(90deg,#006099 0px,#024a99 180px,#4e4099 238px,#993497 284px,#99216f 312px,#990f4b 354px,#99002c 418px,#990011 526px,#990001 658px,#990001 659px)"></i><i style="top:378px;background:linear-gradient(90deg,#005d99 0px,#014899 178px,#4f3c99 238px,#993198 284px,#991e70 312px,#990d4b 354px,#99002d 418px,#990012 526px,#990002 658px,#990002 659px)"></i><i style="top:381px;background:linear-gradient(90deg,#005b99 0px,#024499 178px,#4f3999 238px,#992d98 284px,#991c70 312px,#990b4c 354px,#99002e 416px,#990013 524px,#990002 658px,#990002 659px)"></i><i style="top:384px;background:linear-gradient(90deg,#005899 0px,#014299 176px,#4d3699 236px,#992a98 284px,#991971 312px,#99094d 354px,#990032 408px,#990016 510px,#990003 658px,#990003 659px)"></i><i style="top:387px;background:linear-gradient(90deg,#005699 0px,#003f99 174px,#4e3399 236px,#992799 284px,#99156f 314px,#99074b 358px,#990034 404px,#990018 502px,#990003 658px,#990003 659px)"></i><i style="top:390px;background:linear-gradient(90deg,#005399 0px,#023c99 174px,#4e3099 236px,#992399 284px,#991370 314px,#99054c 358px,#990035 402px,#99001a 498px,#990004 658px,#990004 659px)"></i><i style="top:393px;background:linear-gradient(90deg,#005199 0px,#013a99 172px,#4f2c99 236px,#982099 284px,#99106f 316px,#99034b 360px,#99002c 430px,#990011 548px,#990004 658px,#990004 659px)"></i><i style="top:396px;background:linear-gradient(90deg,#004f99 0px,#023799 172px,#4f2999 236px,#991c96 286px,#990d6f 316px,#99004b 362px,#99002c 432px,#990011 550px,#990005 658px,#990004 659px)"></i><i style="top:399px;background:linear-gradient(90deg,#004d99 0px,#013499 170px,#4d2799 234px,#991997 286px,#990a6e 318px,#99004a 364px,#99002b 436px,#990011 558px,#990005 658px,#990005 659px)"></i><i style="top:402px;background:linear-gradient(90deg,#004a99 0px,#023299 170px,#502499 236px,#991697 286px,#99086e 318px,#99004d 360px,#99002e 430px,#990013 548px,#990005 658px,#990005 659px)"></i><i style="top:405px;background:linear-gradient(90deg,#004899 0px,#022f99 168px,#4e2199 234px,#991398 286px,#99066f 318px,#990050 356px,#990030 424px,#990015 536px,#990006 658px,#990006 659px)"></i><i style="top:408px;background:linear-gradient(90deg,#004699 0px,#012d99 166px,#4f1e99 234px,#991098 286px,#99046f 318px,#990050 358px,#990030 428px,#990015 544px,#990006 658px,#990006 659px)"></i><i style="top:411px;background:linear-gradient(90deg,#004499 0px,#022b99 166px,#4f1c99 234px,#990d98 286px,#990270 318px,#99004c 366px,#99002c 440px,#990012 564px,#990007 658px,#990007 659px)"></i><i style="top:414px;background:linear-gradient(90deg,#004299 0px,#012999 164px,#4d1a99 232px,#990a99 286px,#990071 318px,#99004c 366px,#99002d 440px,#990012 564px,#990007 658px,#990007 659px)"></i><i style="top:417px;background:linear-gradient(90deg,#004099 0px,#022699 164px,#501699 234px,#990899 286px,#990071 318px,#99004d 366px,#99002e 440px,#990013 564px,#990008 658px,#990007 659px)"></i><i style="top:420px;background:linear-gradient(90deg,#003e99 0px,#022499 162px,#4e1499 232px,#990599 286px,#990074 316px,#99004f 364px,#99002f 438px,#990014 562px,#990008 658px,#990008 659px)"></i><i style="top:423px;background:linear-gradient(90deg,#003c99 0px,#012299 160px,#4f1299 232px,#990296 288px,#99006e 322px,#99004b 372px,#99002c 450px,#990011 582px,#990008 658px,#990008 659px)"></i><i style="top:426px;background:linear-gradient(90deg,#003a99 0px,#022099 160px,#4f1099 232px,#990097 288px,#99006f 322px,#99004b 372px,#99002c 450px,#990012 582px,#990009 658px,#990009 659px)"></i><i style="top:429px;background:linear-gradient(90deg,#003899 0px,#011e99 158px,#4d0e99 230px,#990097 288px,#990070 322px,#99004b 374px,#99002c 454px,#990011 588px,#990009 658px,#990009 659px)"></i><i style="top:432px;background:linear-gradient(90deg,#003699 0px,#021c99 158px,#500b99 232px,#8f0099 280px,#990097 288px,#99006e 324px,#99004b 376px,#99002b 458px,#990011 596px,#99000a 658px,#99000a 659px)"></i><i style="top:435px;background:linear-gradient(90deg,#003499 0px,#011a99 156px,#4e0999 230px,#860099 274px,#990098 288px,#99006f 324px,#99004b 376px,#99002c 458px,#990011 596px,#99000a 658px,#99000a 659px)"></i><i style="top:438px;background:linear-gradient(90deg,#003299 0px,#021899 156px,#4f0799 230px,#7e0099 268px,#990098 288px,#99006f 324px,#99004c 376px,#99002c 458px,#990012 596px,#99000b 658px,#99000a 659px)"></i><i style="top:441px;background:linear-gradient(90deg,#003099 0px,#021699 154px,#4f0599 230px,#7b0099 266px,#990098 288px,#990070 324px,#99004b 378px,#99002c 462px,#990011 602px,#99000b 658px,#99000b 659px)"></i><i style="top:444px;background:linear-gradient(90deg,#002e99 0px,#011599 152px,#4d0399 228px,#990099 288px,#990070 324px,#99004c 378px,#99002c 462px,#990012 602px,#99000b 658px,#99000b 659px)"></i><i style="top:447px;background:linear-gradient(90deg,#002c99 0px,#021399 152px,#500099 230px,#990099 288px,#990071 324px,#99004c 378px,#99002d 462px,#990012 602px,#99000c 658px,#99000c 659px)"></i><i style="top:450px;background:linear-gradient(90deg,#002b99 0px,#011199 150px,#4e0099 228px,#990096 290px,#99006e 328px,#99004a 384px,#99002b 472px,#990010 620px,#99000c 658px,#99000c 659px)"></i><i style="top:453px;background:linear-gradient(90deg,#002999 0px,#020f99 150px,#4f0099 228px,#990097 290px,#99006e 328px,#99004b 384px,#99002b 472px,#990011 620px,#99000d 658px,#99000c 659px)"></i><i style="top:456px;background:linear-gradient(90deg,#002799 0px,#020e99 148px,#460099 220px,#990097 290px,#99006f 328px,#99004b 384px,#99002c 472px,#990011 620px,#99000d 658px,#99000d 659px)"></i><i style="top:459px;background:linear-gradient(90deg,#002599 0px,#010c99 146px,#3e0099 212px,#900099 282px,#990097 290px,#99006f 328px,#99004c 384px,#99002c 472px,#990012 620px,#99000d 658px,#99000d 659px)"></i><i style="top:462px;background:linear-gradient(90deg,#002499 0px,#020a99 146px,#390099 206px,#880099 276px,#990098 290px,#99006e 330px,#99004a 388px,#99002b 478px,#990011 630px,#99000e 658px,#99000e 659px)"></i><i style="top:465px;background:linear-gradient(90deg,#002299 0px,#010999 144px,#340099 200px,#830099 272px,#990098 290px,#99006f 330px,#99004b 388px,#99002c 478px,#990011 630px,#99000e 658px,#99000e 659px)"></i><i style="top:468px;background:linear-gradient(90deg,#002099 0px,#020799 144px,#2e0099 194px,#7e0099 268px,#990098 290px,#99006f 330px,#99004b 388px,#99002c 478px,#990012 630px,#99000f 658px,#99000e 659px)"></i><i style="top:471px;background:linear-gradient(90deg,#001f99 0px,#010699 142px,#290099 188px,#790099 264px,#990098 290px,#990070 330px,#99004c 388px,#99002c 480px,#990012 634px,#99000f 658px,#99000f 659px)"></i><i style="top:474px;background:linear-gradient(90deg,#001d99 0px,#020499 142px,#2c0099 190px,#7c0099 266px,#990099 290px,#990070 330px,#99004c 390px,#99002c 482px,#990012 638px,#99000f 658px,#99000f 659px)"></i><i style="top:477px;background:linear-gradient(90deg,#001c99 0px,#020399 140px,#500099 226px,#990096 292px,#99006d 334px,#990049 396px,#99002a 492px,#990010 654px,#990010 659px)"></i><i style="top:480px;background:linear-gradient(90deg,#001a99 0px,#010299 138px,#4e0099 224px,#990097 292px,#99006e 334px,#99004a 396px,#99002b 492px,#990011 654px,#990010 659px)"></i><i style="top:483px;background:linear-gradient(90deg,#001899 0px,#020099 138px,#4e0099 224px,#990097 292px,#99006e 334px,#99004a 396px,#99002b 492px,#990011 654px,#990010 659px)"></i><i style="top:486px;background:linear-gradient(90deg,#001799 0px,#010099 136px,#4f0099 224px,#990097 292px,#99006f 334px,#99004b 396px,#99002c 492px,#990011 654px,#990011 659px)"></i><i style="top:489px;background:linear-gradient(90deg,#001599 0px,#020099 136px,#4f0099 224px,#990097 292px,#99006f 334px,#99004b 396px,#99002c 494px,#990011 658px,#990011 659px)"></i><i style="top:492px;background:linear-gradient(90deg,#001499 0px,#000099 130px,#3e0099 206px,#8e0099 282px,#990098 292px,#990070 334px,#99004c 396px,#99002c 494px,#990012 658px,#990012 659px)"></i><i style="top:495px;background:linear-gradient(90deg,#001299 0px,#000099 122px,#040099 136px,#520099 226px,#990098 292px,#99006f 336px,#99004b 400px,#99002b 500px,#990012 658px,#990012 659px)"></i><i style="top:498px;background:linear-gradient(90deg,#001199 0px,#000099 116px,#030099 134px,#500099 224px,#990098 292px,#99006f 336px,#99004b 400px,#99002c 500px,#990012 658px,#990012 659px)"></i><i style="top:501px;background:linear-gradient(90deg,#001099 0px,#000099 108px,#030099 132px,#510099 224px,#990098 292px,#99006f 336px,#99004c 400px,#99002c 500px,#990013 658px,#990013 659px)"></i><i style="top:504px;background:linear-gradient(90deg,#000e99 0px,#000099 100px,#020099 130px,#4f0099 222px,#990099 292px,#990070 336px,#99004c 400px,#99002d 500px,#990013 658px,#990013 659px)"></i><i style="top:507px;background:linear-gradient(90deg,#000d99 0px,#000099 94px,#020099 128px,#500099 222px,#990097 294px,#99006d 340px,#990049 408px,#99002a 514px,#990014 658px,#990013 659px)"></i><i style="top:510px;background:linear-gradient(90deg,#000b99 0px,#000099 86px,#020099 128px,#500099 222px,#990097 294px,#99006e 340px,#99004a 408px,#99002a 514px,#990014 658px,#990014 659px)"></i><i style="top:513px;background:linear-gradient(90deg,#000a99 0px,#000099 78px,#020099 126px,#4e0099 220px,#990097 294px,#99006e 340px,#99004a 408px,#99002b 514px,#990014 658px,#990014 659px)"></i><i style="top:516px;background:linear-gradient(90deg,#000999 0px,#000099 72px,#030099 126px,#510099 222px,#990097 294px,#99006f 340px,#99004b 408px,#99002b 514px,#990015 658px,#990015 659px)"></i><i style="top:519px;background:linear-gradient(90deg,#000799 0px,#000099 66px,#020099 124px,#4f0099 220px,#990098 294px,#99006f 340px,#99004b 408px,#99002c 514px,#990015 658px,#990015 659px)"></i><i style="top:522px;background:linear-gradient(90deg,#000699 0px,#000099 64px,#030099 124px,#4f0099 220px,#990098 294px,#99006f 340px,#99004b 408px,#99002c 514px,#990015 658px,#990015 659px)"></i><i style="top:525px;background:linear-gradient(90deg,#000699 0px,#000099 64px,#030099 124px,#4f0099 220px,#990098 294px,#99006f 340px,#99004b 408px,#99002c 514px,#990015 658px,#990015 659px)"></i></div></div><div class="b" style="left:1160px;top:145px;width:660px;height:525px;clip-path:path('M569.9,318.2 L268.5,150.8 L135.5,485.6Z')"><div class="b rows" style="left:0;top:0;width:660px;height:525px;filter:blur(1.5px)"><i style="top:-3px;background:linear-gradient(90deg,#00ff00 0px,#01ff00 330px,#65ff00 432px,#ceff00 520px,#fffd00 558px,#ffc700 604px,#ff9b00 658px,#ff9a00 659px)"></i><i style="top:0px;background:linear-gradient(90deg,#00ff00 0px,#02ff00 330px,#65ff00 430px,#cbff00 516px,#ffff00 554px,#ffca00 598px,#ff9900 658px,#ff9800 659px)"></i><i style="top:3px;background:linear-gradient(90deg,#00ff01 0px,#02ff00 328px,#65ff00 428px,#ccff00 514px,#fffe00 552px,#ffc900 596px,#ff9800 656px,#ff9600 659px)"></i><i style="top:6px;background:linear-gradient(90deg,#00ff02 0px,#01ff00 326px,#64ff00 426px,#ccff00 512px,#fffd00 550px,#ffc800 594px,#ff9700 654px,#ff9400 659px)"></i><i style="top:9px;background:linear-gradient(90deg,#00ff03 0px,#00ff00 136px,#02ff00 326px,#64ff00 424px,#cdff00 510px,#ffff00 546px,#ffc900 590px,#ff9900 648px,#ff9200 658px,#ff9200 659px)"></i><i style="top:12px;background:linear-gradient(90deg,#00ff04 0px,#00ff00 58px,#01ff00 324px,#64ff00 422px,#cbff00 506px,#fffe00 544px,#ffc800 588px,#ff9800 646px,#ff9000 658px,#ff9000 659px)"></i><i style="top:15px;background:linear-gradient(90deg,#00ff05 0px,#00ff00 52px,#02ff00 324px,#66ff00 422px,#ceff00 506px,#fffd00 542px,#ffc800 586px,#ff9700 644px,#ff8e00 658px,#ff8e00 659px)"></i><i style="top:18px;background:linear-gradient(90deg,#00ff06 0px,#00ff00 54px,#02ff00 322px,#64ff00 418px,#ccff00 502px,#ffff00 538px,#ffc900 582px,#ff9800 640px,#ff8c00 658px,#ff8b00 659px)"></i><i style="top:21px;background:linear-gradient(90deg,#00ff07 0px,#00ff00 56px,#01ff00 320px,#63ff00 416px,#c9ff00 498px,#fffe00 536px,#ffca00 578px,#ff9800 636px,#ff8a00 658px,#ff8900 659px)"></i><i style="top:24px;background:linear-gradient(90deg,#00ff08 0px,#00ff00 60px,#02ff00 320px,#66ff00 416px,#cdff00 498px,#fffd00 534px,#ffc900 576px,#ff9900 632px,#ff8800 658px,#ff8700 659px)"></i><i style="top:27px;background:linear-gradient(90deg,#00ff09 0px,#00ff00 66px,#01ff00 318px,#63ff00 412px,#caff00 494px,#fffc00 532px,#ffc800 574px,#ff9800 630px,#ff8600 658px,#ff8500 659px)"></i><i style="top:30px;background:linear-gradient(90deg,#00ff0a 0px,#00ff00 70px,#03ff00 318px,#65ff00 412px,#ceff00 494px,#ffff00 528px,#ffc900 570px,#ff9900 626px,#ff8400 658px,#ff8300 659px)"></i><i style="top:33px;background:linear-gradient(90deg,#00ff0b 0px,#00ff00 74px,#02ff00 316px,#65ff00 410px,#cbff00 490px,#fffe00 526px,#ffc800 568px,#ff9800 624px,#ff8200 658px,#ff8100 659px)"></i><i style="top:36px;background:linear-gradient(90deg,#00ff0c 0px,#00ff00 80px,#01ff00 314px,#62ff00 406px,#c9ff00 486px,#fffd00 524px,#ffc700 566px,#ff9700 622px,#ff8000 658px,#ff7f00 659px)"></i><i style="top:39px;background:linear-gradient(90deg,#00ff0e 0px,#00ff00 84px,#02ff00 314px,#65ff00 406px,#ccff00 486px,#ffff00 520px,#ffc900 562px,#ff9700 618px,#ff7e00 658px,#ff7d00 659px)"></i><i style="top:42px;background:linear-gradient(90deg,#00ff0f 0px,#00ff00 90px,#01ff00 312px,#64ff00 404px,#cdff00 484px,#fffe00 518px,#ffca00 558px,#ff9900 612px,#ff7c00 658px,#ff7b00 659px)"></i><i style="top:45px;background:linear-gradient(90deg,#00ff10 0px,#00ff00 94px,#01ff00 310px,#64ff00 402px,#cbff00 480px,#fffd00 516px,#ffc900 556px,#ff9800 610px,#ff7a00 658px,#ff7900 659px)"></i><i style="top:48px;background:linear-gradient(90deg,#00ff11 0px,#00ff00 100px,#02ff00 310px,#64ff00 400px,#cbff00 478px,#ffff00 512px,#ffc800 554px,#ff9700 608px,#ff7800 658px,#ff7700 659px)"></i><i style="top:51px;background:linear-gradient(90deg,#00ff12 0px,#00ff00 104px,#01ff00 308px,#64ff00 398px,#ccff00 476px,#fffe00 510px,#ffc900 550px,#ff9800 604px,#ff7600 658px,#ff7500 659px)"></i><i style="top:54px;background:linear-gradient(90deg,#00ff13 0px,#00ff00 110px,#02ff00 308px,#66ff00 398px,#ccff00 474px,#fffd00 508px,#ffc800 548px,#ff9700 602px,#ff7400 658px,#ff7400 659px)"></i><i style="top:57px;background:linear-gradient(90deg,#00ff15 0px,#00ff00 114px,#01ff00 306px,#63ff00 394px,#caff00 470px,#fffc00 506px,#ffc700 546px,#ff9600 600px,#ff7200 658px,#ff7200 659px)"></i><i style="top:60px;background:linear-gradient(90deg,#00ff16 0px,#00ff00 120px,#01ff00 304px,#63ff00 392px,#caff00 468px,#ffff00 502px,#ffc800 542px,#ff9800 594px,#ff7000 658px,#ff7000 659px)"></i><i style="top:63px;background:linear-gradient(90deg,#00ff17 0px,#00ff00 126px,#02ff00 304px,#65ff00 392px,#ceff00 468px,#fffe00 500px,#ffc700 540px,#ff9700 592px,#ff6e00 658px,#ff6e00 659px)"></i><i style="top:66px;background:linear-gradient(90deg,#00ff18 0px,#00ff00 130px,#01ff00 302px,#63ff00 388px,#c8ff00 462px,#fffd00 498px,#ffc900 536px,#ff9800 588px,#ff6d00 658px,#ff6c00 659px)"></i><i style="top:69px;background:linear-gradient(90deg,#00ff1a 0px,#00ff00 136px,#02ff00 302px,#65ff00 388px,#ccff00 462px,#ffff00 494px,#ffca00 532px,#ff9a00 582px,#ff6e00 652px,#ff6a00 659px)"></i><i style="top:72px;background:linear-gradient(90deg,#00ff1b 0px,#00ff00 142px,#01ff00 300px,#65ff00 386px,#ccff00 460px,#fffe00 492px,#ffc900 530px,#ff9900 580px,#ff6d00 650px,#ff6900 658px,#ff6800 659px)"></i><i style="top:75px;background:linear-gradient(90deg,#00ff1c 0px,#00ff00 146px,#01ff00 298px,#62ff00 382px,#caff00 456px,#fffd00 490px,#ffc800 528px,#ff9800 578px,#ff6c00 648px,#ff6700 658px,#ff6700 659px)"></i><i style="top:78px;background:linear-gradient(90deg,#00ff1e 0px,#00ff00 152px,#02ff00 298px,#64ff00 382px,#caff00 454px,#ffff00 486px,#ffc900 524px,#ff9900 574px,#ff6d00 642px,#ff6500 658px,#ff6500 659px)"></i><i style="top:81px;background:linear-gradient(90deg,#00ff1f 0px,#00ff00 156px,#01ff00 296px,#64ff00 380px,#cbff00 452px,#fffe00 484px,#ffc800 522px,#ff9800 572px,#ff6c00 640px,#ff6300 658px,#ff6300 659px)"></i><i style="top:84px;background:linear-gradient(90deg,#00ff20 0px,#00ff00 162px,#02ff00 296px,#64ff00 378px,#ccff00 450px,#fffd00 482px,#ffc700 520px,#ff9700 570px,#ff6b00 638px,#ff6200 658px,#ff6100 659px)"></i><i style="top:87px;background:linear-gradient(90deg,#00ff22 0px,#00ff00 168px,#01ff00 294px,#64ff00 376px,#c9ff00 446px,#feff00 478px,#ffc600 518px,#ff9600 568px,#ff6a00 636px,#ff6000 658px,#ff5f00 659px)"></i><i style="top:90px;background:linear-gradient(90deg,#00ff23 0px,#00ff00 172px,#01ff00 292px,#63ff00 374px,#caff00 444px,#ffff00 476px,#ffca00 512px,#ff9900 560px,#ff6e00 626px,#ff5e00 658px,#ff5e00 659px)"></i><i style="top:93px;background:linear-gradient(90deg,#00ff25 0px,#00ff00 178px,#02ff00 292px,#63ff00 372px,#caff00 442px,#fffe00 474px,#ffc900 510px,#ff9800 558px,#ff6d00 624px,#ff5c00 658px,#ff5c00 659px)"></i><i style="top:96px;background:linear-gradient(90deg,#00ff26 0px,#00ff00 184px,#01ff00 290px,#63ff00 370px,#cbff00 440px,#fffd00 472px,#ffc800 508px,#ff9700 556px,#ff6c00 622px,#ff5a00 658px,#ff5a00 659px)"></i><i style="top:99px;background:linear-gradient(90deg,#00ff28 0px,#00ff00 188px,#02ff00 290px,#65ff00 370px,#cbff00 438px,#ffff00 468px,#ffc900 504px,#ff9800 552px,#ff6c00 618px,#ff5900 658px,#ff5800 659px)"></i><i style="top:102px;background:linear-gradient(90deg,#00ff29 0px,#00ff00 194px,#01ff00 288px,#65ff00 368px,#ccff00 436px,#fffe00 466px,#ffc800 502px,#ff9700 550px,#ff6b00 616px,#ff5700 658px,#ff5700 659px)"></i><i style="top:105px;background:linear-gradient(90deg,#00ff2a 0px,#00ff00 200px,#01ff00 286px,#62ff00 364px,#c9ff00 432px,#fffd00 464px,#ffc700 500px,#ff9600 548px,#ff6a00 614px,#ff5500 658px,#ff5500 659px)"></i><i style="top:108px;background:linear-gradient(90deg,#00ff2c 0px,#00ff00 204px,#02ff00 286px,#65ff00 364px,#cdff00 432px,#ffff00 460px,#ffc800 496px,#ff9800 542px,#ff6c00 606px,#ff5400 658px,#ff5300 659px)"></i><i style="top:111px;background:linear-gradient(90deg,#00ff2e 0px,#00ff00 210px,#01ff00 284px,#64ff00 362px,#caff00 428px,#fffe00 458px,#ffca00 492px,#ff9900 538px,#ff6c00 602px,#ff5200 658px,#ff5100 659px)"></i><i style="top:114px;background:linear-gradient(90deg,#00ff2f 0px,#00ff00 214px,#02ff00 284px,#64ff00 360px,#cbff00 426px,#fffd00 456px,#ffc900 490px,#ff9800 536px,#ff6b00 600px,#ff5000 658px,#ff5000 659px)"></i><i style="top:117px;background:linear-gradient(90deg,#00ff31 0px,#00ff01 206px,#01ff00 282px,#64ff00 358px,#ccff00 424px,#feff00 452px,#ffc500 490px,#ff9500 536px,#ff6900 600px,#ff4f00 658px,#ff4e00 659px)"></i><i style="top:120px;background:linear-gradient(90deg,#00ff32 0px,#00ff03 204px,#00ff00 256px,#00ff00 280px,#64ff00 356px,#ccff00 422px,#ffff00 450px,#ffc900 484px,#ff9900 528px,#ff6d00 590px,#ff4d00 658px,#ff4c00 659px)"></i><i style="top:123px;background:linear-gradient(90deg,#00ff34 0px,#00ff05 204px,#00ff00 238px,#02ff00 280px,#63ff00 354px,#c9ff00 418px,#fffe00 448px,#ffc800 482px,#ff9800 526px,#ff6c00 588px,#ff4b00 658px,#ff4b00 659px)"></i><i style="top:126px;background:linear-gradient(90deg,#00ff36 0px,#00ff07 202px,#00ff00 238px,#01ff00 278px,#63ff00 352px,#caff00 416px,#fffc00 446px,#ffc700 480px,#ff9700 524px,#ff6b00 586px,#ff4a00 658px,#ff4900 659px)"></i><i style="top:129px;background:linear-gradient(90deg,#00ff37 0px,#00ff09 202px,#00ff00 242px,#02ff00 278px,#66ff00 352px,#ceff00 416px,#ffff00 442px,#ffc800 476px,#ff9800 520px,#ff6c00 580px,#ff4800 658px,#ff4800 659px)"></i><i style="top:132px;background:linear-gradient(90deg,#00ff39 0px,#00ff0a 202px,#00ff00 248px,#01ff00 276px,#63ff00 348px,#c8ff00 410px,#fffe00 440px,#ffca00 472px,#ff9800 516px,#ff6c00 576px,#ff4600 658px,#ff4600 659px)"></i><i style="top:135px;background:linear-gradient(90deg,#00ff3b 0px,#00ff0d 200px,#00ff00 252px,#00ff00 274px,#62ff00 346px,#c8ff00 408px,#fffd00 438px,#ffc800 470px,#ff9700 514px,#ff6b00 574px,#ff4500 658px,#ff4400 659px)"></i><i style="top:138px;background:linear-gradient(90deg,#00ff3d 0px,#00ff0e 200px,#00ff00 256px,#02ff00 274px,#65ff00 346px,#cdff00 408px,#feff00 434px,#ffc700 468px,#ff9600 512px,#ff6a00 572px,#ff4300 658px,#ff4300 659px)"></i><i style="top:141px;background:linear-gradient(90deg,#00ff3e 0px,#00ff10 200px,#00ff00 262px,#01ff00 272px,#62ff00 342px,#caff00 404px,#fffe00 432px,#ffc900 464px,#ff9900 506px,#ff6d00 564px,#ff4500 648px,#ff4100 658px,#ff4100 659px)"></i><i style="top:144px;background:linear-gradient(90deg,#00ff40 0px,#00ff13 198px,#00ff00 266px,#04ff00 273px,#66ff00 343px,#ccff00 403px,#ffff00 429px,#ffc900 461px,#ff9800 503px,#ff6c00 561px,#ff4500 643px,#ff4000 659px)"></i><i style="top:147px;background:linear-gradient(90deg,#00ff42 0px,#00ff14 198px,#01ff00 270px,#64ff00 340px,#cbff00 400px,#feff00 426px,#ffc600 460px,#ff9600 502px,#ff6b00 560px,#ff4300 644px,#ff3e00 658px,#ff3e00 659px)"></i><i style="top:150px;background:linear-gradient(90deg,#00ff44 0px,#00ff17 196px,#00ff00 268px,#64ff00 338px,#ccff00 398px,#ffff00 424px,#ffcb00 454px,#ff9b00 494px,#ff6e00 550px,#ff4700 630px,#ff3d00 658px,#ff3c00 659px)"></i><i style="top:153px;background:linear-gradient(90deg,#00ff46 0px,#00ff19 196px,#02ff02 268px,#64ff00 336px,#ccff00 396px,#fffe00 422px,#ffc900 452px,#ff9a00 492px,#ff6d00 548px,#ff4600 628px,#ff3b00 658px,#ff3b00 659px)"></i><i style="top:156px;background:linear-gradient(90deg,#00ff48 0px,#00ff1b 196px,#01ff05 266px,#27ff00 294px,#8bff00 358px,#f5ff00 414px,#fffc00 420px,#ffc800 450px,#ff9800 490px,#ff6c00 546px,#ff4500 626px,#ff3a00 658px,#ff3900 659px)"></i><i style="top:159px;background:linear-gradient(90deg,#00ff4a 0px,#00ff1d 194px,#03ff07 266px,#2cff00 296px,#8fff00 358px,#f6ff00 412px,#fffd00 417px,#ffc800 447px,#ff9800 487px,#ff6c00 543px,#ff4400 623px,#ff3800 659px)"></i><i style="top:162px;background:linear-gradient(90deg,#00ff4c 0px,#00ff1f 194px,#01ff0a 264px,#34ff00 300px,#9aff00 362px,#fffe00 414px,#ffc900 444px,#ff9800 484px,#ff6c00 538px,#ff4500 616px,#ff3700 658px,#ff3600 659px)"></i><i style="top:165px;background:linear-gradient(90deg,#00ff4e 0px,#00ff22 194px,#00ff0c 262px,#3dff00 304px,#a1ff00 364px,#fffd00 412px,#ffc700 442px,#ff9700 482px,#ff6b00 536px,#ff4400 614px,#ff3500 658px,#ff3500 659px)"></i><i style="top:168px;background:linear-gradient(90deg,#00ff50 0px,#00ff24 194px,#02ff0e 262px,#48ff00 310px,#adff00 368px,#feff00 408px,#ffc600 440px,#ff9500 480px,#ff6a00 534px,#ff4300 612px,#ff3400 658px,#ff3300 659px)"></i><i style="top:171px;background:linear-gradient(90deg,#00ff52 0px,#00ff26 192px,#01ff11 260px,#51ff00 314px,#b9ff00 372px,#fffe00 406px,#ffcb00 434px,#ff9a00 472px,#ff6e00 524px,#ff4700 598px,#ff3200 658px,#ff3200 659px)"></i><i style="top:174px;background:linear-gradient(90deg,#00ff54 0px,#00ff29 192px,#00ff14 258px,#5eff00 320px,#c5ff00 376px,#fffd00 404px,#ffc900 432px,#ff9900 470px,#ff6d00 522px,#ff4600 596px,#ff3100 658px,#ff3000 659px)"></i><i style="top:177px;background:linear-gradient(90deg,#00ff56 0px,#00ff2b 192px,#01ff16 258px,#65ff00 322px,#caff00 376px,#feff00 400px,#ffc500 432px,#ff9500 470px,#ff6900 524px,#ff4300 600px,#ff2f00 658px,#ff2f00 659px)"></i><i style="top:180px;background:linear-gradient(90deg,#00ff58 0px,#00ff2e 190px,#00ff19 256px,#61ff02 318px,#c7ff00 372px,#ffff00 398px,#ffca00 426px,#ff9800 464px,#ff6c00 516px,#ff4500 590px,#ff2e00 658px,#ff2d00 659px)"></i><i style="top:183px;background:linear-gradient(90deg,#00ff5b 0px,#00ff30 190px,#02ff1c 256px,#64ff04 318px,#90ff00 342px,#f7ff00 392px,#fffb00 397px,#ffc700 425px,#ff9600 463px,#ff6a00 515px,#ff4300 589px,#ff2c00 659px)"></i><i style="top:186px;background:linear-gradient(90deg,#00ff5d 0px,#00ff33 190px,#01ff1f 254px,#64ff08 316px,#94ff00 342px,#fdff00 392px,#ffc400 424px,#ff9400 462px,#ff6800 514px,#ff4100 590px,#ff2b00 658px,#ff2a00 659px)"></i><i style="top:189px;background:linear-gradient(90deg,#00ff5f 0px,#00ff35 190px,#00ff22 252px,#60ff0c 312px,#a0ff00 346px,#ffff00 390px,#ffc900 418px,#ff9900 454px,#ff6d00 504px,#ff4500 576px,#ff2900 658px,#ff2900 659px)"></i><i style="top:192px;background:linear-gradient(90deg,#00ff62 0px,#00ff38 188px,#01ff25 252px,#63ff0e 312px,#b0ff00 352px,#fffe00 388px,#ffcb00 414px,#ff9900 450px,#ff6d00 500px,#ff4600 570px,#ff2800 658px,#ff2800 659px)"></i><i style="top:195px;background:linear-gradient(90deg,#00ff64 0px,#00ff3b 188px,#00ff28 250px,#63ff12 310px,#bdff00 356px,#fffd00 386px,#ffc900 412px,#ff9800 448px,#ff6d00 496px,#ff4600 566px,#ff2600 658px,#ff2600 659px)"></i><i style="top:198px;background:linear-gradient(90deg,#00ff66 0px,#00ff3d 188px,#02ff2b 250px,#62ff15 308px,#c7ff00 358px,#feff00 382px,#ffc800 410px,#ff9700 446px,#ff6c00 494px,#ff4500 564px,#ff2500 658px,#ff2500 659px)"></i><i style="top:201px;background:linear-gradient(90deg,#00ff69 0px,#00ff40 188px,#01ff2e 248px,#62ff19 306px,#c7ff02 356px,#ffff00 380px,#ffca00 406px,#ff9a00 440px,#ff6d00 488px,#ff4600 556px,#ff2400 658px,#ff2300 659px)"></i><i style="top:204px;background:linear-gradient(90deg,#00ff6b 0px,#00ff43 188px,#00ff31 246px,#5eff1d 302px,#c4ff07 352px,#f7ff00 374px,#fffd00 378px,#ffc800 404px,#ff9800 438px,#ff6c00 486px,#ff4500 554px,#ff2300 656px,#ff2200 659px)"></i><i style="top:207px;background:linear-gradient(90deg,#00ff6e 0px,#00ff46 188px,#01ff34 246px,#65ff1f 304px,#ceff09 354px,#fdff00 374px,#ffc300 404px,#ff9200 440px,#ff6800 488px,#ff4100 558px,#ff2100 658px,#ff2100 659px)"></i><i style="top:210px;background:linear-gradient(90deg,#00ff71 0px,#00ff49 186px,#00ff38 244px,#61ff24 300px,#c5ff0f 348px,#ffff03 372px,#ffc800 398px,#ff9800 432px,#ff6c00 478px,#ff4500 544px,#ff2300 644px,#ff1f00 658px,#ff1f00 659px)"></i><i style="top:213px;background:linear-gradient(90deg,#00ff73 0px,#00ff4c 186px,#02ff3b 244px,#64ff27 300px,#cbff12 348px,#fffe07 370px,#ffd200 390px,#ffa000 422px,#ff7300 466px,#ff4b00 528px,#ff2800 620px,#ff1e00 658px,#ff1e00 659px)"></i><i style="top:216px;background:linear-gradient(90deg,#00ff76 0px,#00ff4f 186px,#01ff3f 242px,#64ff2b 298px,#cbff16 346px,#fdff0c 366px,#ffc900 392px,#ff9a00 424px,#ff6e00 468px,#ff4700 532px,#ff2400 628px,#ff1d00 658px,#ff1c00 659px)"></i><i style="top:219px;background:linear-gradient(90deg,#00ff79 0px,#00ff52 186px,#00ff43 240px,#5cff30 292px,#c3ff1c 340px,#feff10 364px,#ffc702 390px,#ff9800 422px,#ff6d00 466px,#ff4600 530px,#ff2300 626px,#ff1b00 658px,#ff1b00 659px)"></i><i style="top:222px;background:linear-gradient(90deg,#00ff7c 0px,#00ff55 186px,#02ff46 240px,#63ff33 294px,#c8ff1f 340px,#fffe14 362px,#ffc906 386px,#ffa600 408px,#ff7900 448px,#ff5100 504px,#ff2d00 588px,#ff1a00 658px,#ff1a00 659px)"></i><i style="top:225px;background:linear-gradient(90deg,#00ff7f 0px,#00ff59 186px,#00ff4a 238px,#63ff37 292px,#c9ff24 338px,#fffd19 360px,#ffc809 384px,#ff9f00 410px,#ff7200 452px,#ff4a00 512px,#ff2700 600px,#ff1900 658px,#ff1800 659px)"></i><i style="top:228px;background:linear-gradient(90deg,#00ff81 0px,#00ff5c 186px,#02ff4d 238px,#63ff3b 290px,#caff28 336px,#feff1f 356px,#ffc60d 382px,#ff9600 414px,#ff6a00 458px,#ff4300 522px,#ff2100 618px,#ff1700 658px,#ff1700 659px)"></i><i style="top:231px;background:linear-gradient(90deg,#00ff84 0px,#00ff60 186px,#01ff51 236px,#62ff40 288px,#c6ff2e 332px,#ffff23 354px,#ffcc13 376px,#ff9c04 406px,#ff7c00 434px,#ff5300 488px,#ff2f00 566px,#ff1600 658px,#ff1600 659px)"></i><i style="top:234px;background:linear-gradient(90deg,#00ff88 0px,#00ff63 186px,#00ff56 234px,#5aff46 282px,#bdff34 326px,#fffd28 352px,#ffca17 374px,#ff9a07 404px,#ff7d00 430px,#ff5400 482px,#ff3000 558px,#ff1500 658px,#ff1400 659px)"></i><i style="top:237px;background:linear-gradient(90deg,#00ff8b 0px,#00ff67 186px,#02ff59 234px,#62ff49 284px,#c8ff37 328px,#fdff2e 348px,#ffc519 374px,#ff9609 404px,#ff7500 434px,#ff4d00 490px,#ff2a00 572px,#ff1300 658px,#ff1300 659px)"></i><i style="top:240px;background:linear-gradient(90deg,#00ff8e 0px,#00ff6a 186px,#00ff5e 232px,#61ff4e 282px,#c9ff3c 326px,#ffff33 346px,#ffcb20 368px,#ff9a0e 398px,#ff6f00 438px,#ff4700 496px,#ff2500 582px,#ff1200 658px,#ff1200 659px)"></i><i style="top:243px;background:linear-gradient(90deg,#00ff91 0px,#00ff6e 186px,#02ff62 232px,#65ff52 282px,#c9ff41 324px,#fffe38 344px,#ffc924 366px,#ff9811 396px,#ff6d00 436px,#ff4600 494px,#ff2400 580px,#ff1100 658px,#ff1000 659px)"></i><i style="top:246px;background:linear-gradient(90deg,#00ff94 0px,#00ff72 188px,#01ff66 230px,#60ff57 278px,#c5ff47 320px,#fcff3e 340px,#ffd02b 360px,#ff9f17 388px,#ff7306 426px,#ff5c00 454px,#ff3600 522px,#ff1600 626px,#ff0f00 658px,#ff0f00 659px)"></i><i style="top:249px;background:linear-gradient(90deg,#00ff98 0px,#00ff76 188px,#00ff6b 228px,#5bff5d 274px,#c1ff4d 316px,#feff44 338px,#ffc62c 362px,#ff9517 392px,#ff6a05 432px,#ff5400 462px,#ff3000 534px,#ff1000 646px,#ff0e00 658px,#ff0e00 659px)"></i><i style="top:252px;background:linear-gradient(90deg,#00ff9b 0px,#00ff7a 188px,#02ff70 228px,#64ff61 276px,#ccff51 318px,#fffe49 336px,#ffc832 358px,#ff981d 386px,#ff6c09 426px,#ff5100 462px,#ff2d00 536px,#ff0e00 652px,#ff0d00 659px)"></i><i style="top:255px;background:linear-gradient(90deg,#00ff9f 0px,#00ff7e 190px,#00ff75 226px,#63ff66 274px,#c8ff58 314px,#fffc4f 334px,#ffca38 354px,#ff9a21 382px,#ff6e0d 420px,#ff4c00 466px,#ff2800 544px,#ff0b00 658px,#ff0b00 659px)"></i><i style="top:258px;background:linear-gradient(90deg,#00ffa2 0px,#00ff82 190px,#02ff79 226px,#63ff6c 272px,#c9ff5e 312px,#fdff56 330px,#ffc43a 354px,#ff9523 382px,#ff6b0f 420px,#ff4600 472px,#ff2300 554px,#ff0a00 658px,#ff0a00 659px)"></i><i style="top:261px;background:linear-gradient(90deg,#00ffa6 0px,#00ff86 192px,#01ff7e 224px,#63ff71 270px,#caff63 310px,#ffff5c 328px,#ffcb42 348px,#ff9c2b 374px,#ff7016 410px,#ff4902 462px,#ff2600 540px,#ff0900 658px,#ff0900 659px)"></i><i style="top:264px;background:linear-gradient(90deg,#00ffaa 0px,#00ff8b 192px,#00ff84 222px,#59ff78 264px,#bfff6b 304px,#fffd62 326px,#ffc947 346px,#ff9a2f 372px,#ff6f18 408px,#ff4704 460px,#ff3500 496px,#ff1500 594px,#ff0800 658px,#ff0700 659px)"></i><i style="top:267px;background:linear-gradient(90deg,#00ffae 0px,#00ff8f 194px,#02ff89 222px,#62ff7d 266px,#c6ff71 304px,#fdff6a 322px,#ffc349 346px,#ff922f 374px,#ff6718 412px,#ff4104 466px,#ff2f00 504px,#ff1000 608px,#ff0600 658px,#ff0600 659px)"></i><i style="top:270px;background:linear-gradient(90deg,#00ffb2 0px,#00ff94 196px,#00ff8e 220px,#61ff83 264px,#c7ff77 302px,#ffff71 320px,#ffc953 340px,#ff9938 366px,#ff6d1f 402px,#ff4609 454px,#ff3100 496px,#ff1100 598px,#ff0500 658px,#ff0500 659px)"></i><i style="top:273px;background:linear-gradient(90deg,#00ffb6 0px,#00ff99 198px,#02ff94 220px,#66ff89 264px,#ceff7d 302px,#fffe77 318px,#ffc757 338px,#ff973c 364px,#ff6c22 400px,#ff440b 452px,#ff2d00 500px,#ff0e00 606px,#ff0400 658px,#ff0400 659px)"></i><i style="top:276px;background:linear-gradient(90deg,#00ffba 0px,#00ff9d 200px,#01ff9a 218px,#60ff90 260px,#c3ff85 296px,#fcff7f 314px,#fff579 318px,#ffc15a 338px,#ff923e 364px,#ff6824 400px,#ff420d 452px,#ff2800 506px,#ff0a00 616px,#ff0300 658px,#ff0300 659px)"></i><i style="top:279px;background:linear-gradient(90deg,#00ffbe 0px,#00ffa3 202px,#00ffa0 216px,#56ff97 254px,#b8ff8e 290px,#feff87 312px,#ffc864 332px,#ff9a47 356px,#ff6e2c 390px,#ff4714 438px,#ff2600 508px,#ff0800 622px,#ff0100 658px,#ff0100 659px)"></i><i style="top:282px;background:linear-gradient(90deg,#00ffc2 0px,#00ffa8 206px,#02ffa6 216px,#64ff9d 258px,#cbff93 294px,#fffe8e 310px,#ffcb6c 328px,#ff9b4d 352px,#ff6e30 386px,#ff4717 434px,#ff2400 506px,#ff0700 620px,#ff0000 658px,#ff0000 659px)"></i><i style="top:285px;background:linear-gradient(90deg,#00ffc7 0px,#00ffad 210px,#02ffac 215px,#61ffa4 255px,#c9ff9b 291px,#feff96 307px,#ffc670 327px,#ff9750 351px,#ff6c33 385px,#ff4519 433px,#ff2302 505px,#ff0500 621px,#ff0000 659px)"></i><i style="top:288px;background:linear-gradient(90deg,#00ffcb 0px,#02ffb2 214px,#64ffab 254px,#c7ffa3 288px,#fdff9f 304px,#ffc274 326px,#ff9454 350px,#ff6935 384px,#ff431b 432px,#ff2003 506px,#ff0300 624px,#ff0000 658px,#ff0000 659px)"></i><i style="top:291px;background:linear-gradient(90deg,#00ffd0 0px,#01ffb9 212px,#63ffb2 252px,#c8ffab 286px,#ffffa7 302px,#ffc980 320px,#ff985c 344px,#ff6d3d 376px,#ff4621 422px,#ff2308 492px,#ff1500 538px,#ff0000 646px,#ff0000 658px,#ff0000 659px)"></i><i style="top:294px;background:linear-gradient(90deg,#00ffd5 0px,#00ffc0 210px,#52ffbb 244px,#b6ffb5 278px,#fffdae 300px,#ffc786 318px,#ff9661 342px,#ff6b41 374px,#ff4523 420px,#ff2209 490px,#ff1200 542px,#ff0000 640px,#ff0000 658px,#ff0000 659px)"></i><i style="top:297px;background:linear-gradient(90deg,#00ffd9 0px,#02ffc7 210px,#62ffc2 248px,#cbffbc 282px,#fcffb9 296px,#ffedab 302px,#ffbb84 320px,#ff8e60 344px,#ff633f 378px,#ff3d21 428px,#ff1b07 504px,#ff0e00 550px,#ff0000 634px,#ff0000 658px,#ff0000 659px)"></i><i style="top:300px;background:linear-gradient(90deg,#00ffde 0px,#00ffcf 208px,#5cffca 244px,#beffc6 276px,#feffc2 294px,#ffc895 312px,#ff996f 334px,#ff6e4d 364px,#ff472d 408px,#ff2411 474px,#ff0d00 550px,#ff0000 628px,#ff0000 658px,#ff0000 659px)"></i><i style="top:303px;background:linear-gradient(90deg,#00ffe4 0px,#00ffd6 206px,#3fffd4 232px,#a4ffd0 266px,#fffecb 292px,#ffcaa0 308px,#ff9a77 330px,#ff6e52 360px,#ff4832 402px,#ff2515 466px,#ff0b00 552px,#ff0000 620px,#ff0000 658px,#ff0000 659px)"></i><i style="top:306px;background:linear-gradient(90deg,#00ffe9 0px,#01ffde 206px,#60ffdb 242px,#c7ffd8 274px,#fbffd6 288px,#fffbd3 290px,#ffc8a6 306px,#ff987c 328px,#ff6c56 358px,#ff4635 400px,#ff2417 464px,#ff0800 556px,#ff0000 614px,#ff0000 658px,#ff0000 659px)"></i><i style="top:309px;background:linear-gradient(90deg,#00ffee 0px,#00ffe6 204px,#4effe5 234px,#b3ffe2 266px,#fdffe0 286px,#ffc6ad 304px,#ff9581 326px,#ff6a5a 356px,#ff4438 398px,#ff2219 462px,#ff0600 560px,#ff0000 612px,#ff0000 658px,#ff0000 659px)"></i><i style="top:312px;background:linear-gradient(90deg,#00fff4 0px,#02ffef 204px,#65ffed 240px,#caffec 270px,#fffeea 284px,#ffc9b8 300px,#ff9b8d 320px,#ff6f65 348px,#ff4840 388px,#ff2620 448px,#ff0803 544px,#ff0000 600px,#ff0000 658px,#ff0000 659px)"></i><i style="top:315px;background:linear-gradient(90deg,#00fff9 0px,#00fff8 202px,#5ffff7 236px,#c4fff6 266px,#fafff6 280px,#fff8ef 283px,#ffc4bc 299px,#ff938d 321px,#ff6763 351px,#ff413e 393px,#ff201d 457px,#ff0201 561px,#ff0000 659px)"></i><i style="top:318px;background:linear-gradient(90deg,#00ffff 0px,#00fdff 200px,#34fdff 220px,#98fdff 252px,#fafcff 278px,#fff5f8 281px,#ffc1c3 297px,#ff9496 317px,#ff6a6b 345px,#ff4445 385px,#ff2223 445px,#ff0506 541px,#ff0000 589px,#ff0000 659px)"></i><i style="top:321px;background:linear-gradient(90deg,#00f9ff 0px,#01f4ff 200px,#5ff3ff 234px,#c3f2ff 264px,#ffeffd 280px,#ffbcc7 296px,#ff9099 316px,#ff666e 344px,#ff4148 384px,#ff2025 444px,#ff0407 540px,#ff0000 594px,#ff0000 658px,#ff0000 659px)"></i><i style="top:324px;background:linear-gradient(90deg,#00f3ff 0px,#00ecff 198px,#4feaff 228px,#b5e8ff 260px,#ffe5fe 280px,#ffb4c9 296px,#ff8a9b 316px,#ff6270 344px,#ff3e49 384px,#ff1e27 444px,#ff0209 540px,#ff0000 600px,#ff0000 658px,#ff0000 659px)"></i><i style="top:327px;background:linear-gradient(90deg,#00eeff 0px,#02e4ff 198px,#63e0ff 234px,#cbddff 266px,#ffdbfe 280px,#ffacca 296px,#ff8099 318px,#ff596d 348px,#ff3746 390px,#ff1824 454px,#ff0008 548px,#ff0000 606px,#ff0000 658px,#ff0000 659px)"></i><i style="top:330px;background:linear-gradient(90deg,#00e8ff 0px,#00dcff 196px,#5ed8ff 232px,#c4d4ff 264px,#ffd1ff 280px,#ffa5cb 296px,#ff7b9a 318px,#ff556e 348px,#ff3448 390px,#ff1625 454px,#ff000a 542px,#ff0000 610px,#ff0000 658px,#ff0000 659px)"></i><i style="top:333px;background:linear-gradient(90deg,#00e3ff 0px,#02d4ff 196px,#66cfff 234px,#cbcaff 266px,#fec8ff 280px,#ff99c7 298px,#ff7298 320px,#ff4f6e 350px,#ff2e46 394px,#ff1124 460px,#ff000d 536px,#ff0000 614px,#ff0000 658px,#ff0000 659px)"></i><i style="top:336px;background:linear-gradient(90deg,#00ddff 0px,#00ccff 194px,#62c7ff 232px,#c5c1ff 264px,#fdbeff 280px,#ff8ec4 300px,#ff6793 324px,#ff4568 356px,#ff2742 402px,#ff0c20 472px,#ff000f 532px,#ff0000 618px,#ff0000 658px,#ff0000 659px)"></i><i style="top:339px;background:linear-gradient(90deg,#00d8ff 0px,#00c5ff 192px,#4ec0ff 224px,#b1baff 258px,#fdb5ff 280px,#ff84c0 302px,#ff6091 326px,#ff3e66 360px,#ff2140 408px,#ff071e 482px,#ff0011 528px,#ff0000 622px,#ff0000 658px,#ff0000 659px)"></i><i style="top:342px;background:linear-gradient(90deg,#00d3ff 0px,#01beff 192px,#65b7ff 232px,#ccafff 266px,#fcacff 280px,#ffa4f4 284px,#ff7ec1 302px,#ff5b93 326px,#ff3b67 360px,#ff1e41 408px,#ff051f 482px,#ff0013 524px,#ff0000 626px,#ff0000 658px,#ff0000 659px)"></i><i style="top:345px;background:linear-gradient(90deg,#00ceff 0px,#00b7ff 190px,#5cb0ff 228px,#bfa8ff 262px,#fba3ff 280px,#ff9ef8 283px,#ff79c5 301px,#ff5796 325px,#ff386a 359px,#ff1c43 407px,#ff0421 479px,#ff0014 523px,#ff0000 631px,#ff0000 659px)"></i><i style="top:348px;background:linear-gradient(90deg,#00c9ff 0px,#02b0ff 190px,#63a8ff 230px,#c5a0ff 264px,#ff99fc 282px,#ff75c8 300px,#ff5499 324px,#ff356c 358px,#ff1a45 406px,#ff0223 478px,#ff0005 594px,#ff0000 654px,#ff0000 659px)"></i><i style="top:351px;background:linear-gradient(90deg,#00c4ff 0px,#00aaff 188px,#64a1ff 230px,#cc97ff 266px,#ff91fd 282px,#ff6fca 300px,#ff4f9a 324px,#ff326e 358px,#ff1846 406px,#ff0124 478px,#ff0006 594px,#ff0000 656px,#ff0000 659px)"></i><i style="top:354px;background:linear-gradient(90deg,#00bfff 0px,#00a4ff 186px,#519cff 222px,#b392ff 258px,#ff8afe 282px,#ff69cb 300px,#ff4b9b 324px,#ff2e6f 358px,#ff1548 406px,#ff0025 478px,#ff0008 592px,#ff0000 658px,#ff0000 659px)"></i><i style="top:357px;background:linear-gradient(90deg,#00baff 0px,#019dff 186px,#6293ff 228px,#c689ff 264px,#ff83ff 282px,#ff63cc 300px,#ff469d 324px,#ff2b70 358px,#ff1249 406px,#ff0029 472px,#ff000a 582px,#ff0000 658px,#ff0000 659px)"></i><i style="top:360px;background:linear-gradient(90deg,#00b6ff 0px,#0098ff 182px,#0697ff 187px,#668cff 229px,#c981ff 265px,#fb7cff 281px,#ff76f6 285px,#ff57c2 305px,#ff3b93 331px,#ff2269 367px,#ff0b42 419px,#ff002c 467px,#ff000d 575px,#ff0000 659px)"></i><i style="top:363px;background:linear-gradient(90deg,#00b1ff 0px,#0093ff 180px,#0491ff 185px,#6786ff 229px,#cf7aff 267px,#ff73fd 283px,#ff54c7 303px,#ff3998 329px,#ff206c 365px,#ff0a45 417px,#ff0030 459px,#ff0011 561px,#ff0000 659px)"></i><i style="top:366px;background:linear-gradient(90deg,#00adff 0px,#008dff 178px,#028cff 183px,#6480ff 227px,#c974ff 265px,#ff6cfd 283px,#ff4fc8 303px,#ff3599 329px,#ff1d6d 365px,#ff0746 417px,#ff0034 453px,#ff0014 551px,#ff0000 659px)"></i><i style="top:369px;background:linear-gradient(90deg,#00a8ff 0px,#0088ff 176px,#0387ff 182px,#637aff 226px,#c76dff 264px,#fd66ff 282px,#ff46c3 306px,#ff2d93 334px,#ff1668 372px,#ff0242 426px,#ff0020 508px,#ff0004 640px,#ff0001 658px,#ff0001 659px)"></i><i style="top:372px;background:linear-gradient(90deg,#00a4ff 0px,#0083ff 174px,#0381ff 181px,#6674ff 227px,#cf66ff 267px,#ff5fff 283px,#ff45ca 303px,#ff2d9b 329px,#ff1770 365px,#ff0348 417px,#ff0026 495px,#ff0008 619px,#ff0001 659px)"></i><i style="top:375px;background:linear-gradient(90deg,#00a0ff 0px,#007eff 172px,#037cff 180px,#656eff 226px,#cc60ff 266px,#fc59ff 282px,#ff53f3 287px,#ff3abf 309px,#ff228f 339px,#ff0d65 379px,#ff0044 427px,#ff0022 511px,#ff0004 645px,#ff0002 659px)"></i><i style="top:378px;background:linear-gradient(90deg,#009bff 0px,#0079ff 170px,#0277ff 178px,#6269ff 224px,#c75bff 264px,#ff51fd 284px,#ff3aca 304px,#ff2399 332px,#ff0e6e 370px,#ff004a 418px,#ff0027 496px,#ff0009 620px,#ff0003 658px,#ff0003 659px)"></i><i style="top:381px;background:linear-gradient(90deg,#0097ff 0px,#0074ff 170px,#0272ff 177px,#6663ff 225px,#ca54ff 265px,#fe4dff 283px,#ff32c5 307px,#ff1d96 335px,#ff0a6a 375px,#ff0050 411px,#ff002c 485px,#ff000e 601px,#ff0004 659px)"></i><i style="top:384px;background:linear-gradient(90deg,#0093ff 0px,#0070ff 168px,#026dff 176px,#655eff 224px,#cd4eff 266px,#ff46fe 284px,#ff2fc8 306px,#ff1a99 334px,#ff076c 374px,#ff0054 406px,#ff0030 478px,#ff0011 590px,#ff0005 658px,#ff0004 659px)"></i><i style="top:387px;background:linear-gradient(90deg,#008fff 0px,#006bff 166px,#0169ff 174px,#615aff 222px,#c749ff 264px,#ff40ff 284px,#ff2ac9 306px,#ff179a 334px,#ff046e 374px,#ff0058 402px,#ff0033 472px,#ff0013 580px,#ff0005 658px,#ff0005 659px)"></i><i style="top:390px;background:linear-gradient(90deg,#008bff 0px,#0066ff 166px,#0364ff 174px,#6754ff 224px,#cd43ff 266px,#ff3bff 284px,#ff26ca 306px,#ff139b 334px,#ff026f 374px,#ff0048 430px,#ff0025 514px,#ff0008 648px,#ff0006 658px,#ff0006 659px)"></i><i style="top:393px;background:linear-gradient(90deg,#0087ff 0px,#0062ff 164px,#0160ff 172px,#644fff 222px,#cd3eff 266px,#fe35ff 284px,#ff20c7 308px,#ff0e97 338px,#ff006d 378px,#ff0046 436px,#ff0023 524px,#ff0007 658px,#ff0007 659px)"></i><i style="top:396px;background:linear-gradient(90deg,#0083ff 0px,#005eff 164px,#025cff 171px,#634bff 221px,#ca39ff 265px,#ff2ffe 285px,#ff1cca 307px,#ff0b99 337px,#ff0074 371px,#ff004c 427px,#ff0029 509px,#ff000b 639px,#ff0007 659px)"></i><i style="top:399px;background:linear-gradient(90deg,#0080ff 0px,#0059ff 164px,#0457ff 171px,#6446ff 221px,#ca34ff 265px,#ff2afe 285px,#ff18cb 307px,#ff089a 337px,#ff007b 365px,#ff0053 417px,#ff002f 495px,#ff000f 617px,#ff0008 659px)"></i><i style="top:402px;background:linear-gradient(90deg,#007cff 0px,#0055ff 162px,#0253ff 169px,#6541ff 221px,#cb2fff 265px,#ff25ff 285px,#ff14cc 307px,#ff059c 337px,#ff0080 361px,#ff0056 413px,#ff0032 489px,#ff0012 607px,#ff0009 659px)"></i><i style="top:405px;background:linear-gradient(90deg,#0078ff 0px,#0051ff 162px,#034fff 168px,#643dff 220px,#cd29ff 266px,#ff1ffd 286px,#ff0fc7 310px,#ff0096 342px,#ff006a 386px,#ff0044 448px,#ff0022 542px,#ff000a 658px,#ff000a 659px)"></i><i style="top:408px;background:linear-gradient(90deg,#0075ff 0px,#004dff 162px,#054bff 168px,#6638ff 220px,#cd25ff 266px,#ff1bfd 286px,#ff0bc8 310px,#ff009c 338px,#ff0070 380px,#ff0049 440px,#ff0026 530px,#ff000b 658px,#ff000a 659px)"></i><i style="top:411px;background:linear-gradient(90deg,#0071ff 0px,#0049ff 160px,#0347ff 166px,#6734ff 220px,#cd20ff 266px,#ff16fe 286px,#ff07c9 310px,#ff00a6 332px,#ff0079 372px,#ff0050 428px,#ff002d 512px,#ff000e 644px,#ff000b 658px,#ff000b 659px)"></i><i style="top:414px;background:linear-gradient(90deg,#006eff 0px,#0045ff 160px,#0543ff 166px,#6830ff 220px,#cd1bff 266px,#ff11fe 286px,#ff03ca 310px,#ff009c 340px,#ff006f 384px,#ff0048 446px,#ff0026 538px,#ff000c 658px,#ff000c 659px)"></i><i style="top:417px;background:linear-gradient(90deg,#006aff 0px,#0041ff 160px,#1f3aff 180px,#8126ff 232px,#eb11ff 278px,#ff0dff 286px,#ff00cb 310px,#ff009a 342px,#ff006f 386px,#ff0047 450px,#ff0024 546px,#ff000d 658px,#ff000c 659px)"></i><i style="top:420px;background:linear-gradient(90deg,#0067ff 0px,#003dff 160px,#5a2aff 212px,#bf15ff 260px,#ff08ff 286px,#ff00d3 306px,#ff00a1 338px,#ff0075 380px,#ff004d 440px,#ff002a 530px,#ff000d 658px,#ff000d 659px)"></i><i style="top:423px;background:linear-gradient(90deg,#0063ff 0px,#0139ff 160px,#6325ff 216px,#c90fff 264px,#fe04ff 286px,#ff00d4 306px,#ff00a2 338px,#ff0074 382px,#ff004c 444px,#ff0029 536px,#ff000e 658px,#ff000e 659px)"></i><i style="top:426px;background:linear-gradient(90deg,#0060ff 0px,#0036ff 158px,#6021ff 214px,#c90bff 264px,#fe00ff 286px,#ff00c6 314px,#ff0096 348px,#ff006a 396px,#ff0043 464px,#ff0022 566px,#ff000f 658px,#ff000f 659px)"></i><i style="top:429px;background:linear-gradient(90deg,#005dff 0px,#0232ff 158px,#651dff 216px,#ce06ff 266px,#fd00ff 286px,#ff00c4 316px,#ff0093 352px,#ff0067 402px,#ff0040 474px,#ff001e 582px,#ff000f 658px,#ff000f 659px)"></i><i style="top:432px;background:linear-gradient(90deg,#0059ff 0px,#002fff 156px,#631aff 214px,#c903ff 264px,#ff00fc 288px,#ff00c8 314px,#ff0098 348px,#ff006c 396px,#ff0045 464px,#ff0023 566px,#ff0010 658px,#ff0010 659px)"></i><i style="top:435px;background:linear-gradient(90deg,#0056ff 0px,#022cff 156px,#6416ff 214px,#c900ff 264px,#ff00fd 288px,#ff00c9 314px,#ff0099 348px,#ff006d 396px,#ff0046 464px,#ff0024 566px,#ff0011 658px,#ff0011 659px)"></i><i style="top:438px;background:linear-gradient(90deg,#0053ff 0px,#0129ff 154px,#6512ff 214px,#c100ff 260px,#ff00fd 288px,#ff00c9 314px,#ff0098 350px,#ff006d 398px,#ff0045 468px,#ff0023 572px,#ff0012 658px,#ff0011 659px)"></i><i style="top:441px;background:linear-gradient(90deg,#0050ff 0px,#0026ff 152px,#620fff 212px,#b000ff 252px,#ff00fe 288px,#ff00ca 314px,#ff0099 350px,#ff006e 398px,#ff0046 468px,#ff0024 572px,#ff0012 658px,#ff0012 659px)"></i><i style="top:444px;background:linear-gradient(90deg,#004dff 0px,#0223ff 152px,#630cff 212px,#a400ff 246px,#ff00fe 288px,#ff00cb 314px,#ff009a 350px,#ff006d 400px,#ff0046 470px,#ff0024 576px,#ff0013 658px,#ff0013 659px)"></i><i style="top:447px;background:linear-gradient(90deg,#004aff 0px,#0020ff 150px,#6408ff 212px,#9500ff 238px,#ff00ff 288px,#ff00cc 314px,#ff009b 350px,#ff006e 400px,#ff0047 470px,#ff0025 576px,#ff0014 658px,#ff0013 659px)"></i><i style="top:450px;background:linear-gradient(90deg,#0047ff 0px,#021dff 150px,#6505ff 212px,#9100ff 236px,#fa00ff 286px,#ff00fb 290px,#ff00c6 318px,#ff0095 356px,#ff006a 408px,#ff0043 482px,#ff0021 594px,#ff0014 658px,#ff0014 659px)"></i><i style="top:453px;background:linear-gradient(90deg,#0044ff 0px,#011aff 148px,#6302ff 210px,#ca00ff 264px,#fe00ff 288px,#ff00c7 318px,#ff0096 356px,#ff006b 408px,#ff0044 482px,#ff0022 594px,#ff0015 658px,#ff0015 659px)"></i><i style="top:456px;background:linear-gradient(90deg,#0041ff 0px,#0018ff 146px,#6000ff 208px,#c600ff 262px,#fe00ff 288px,#ff00c4 320px,#ff0095 358px,#ff006a 410px,#ff0043 486px,#ff0021 600px,#ff0016 658px,#ff0015 659px)"></i><i style="top:459px;background:linear-gradient(90deg,#003eff 0px,#0114ff 146px,#5e00ff 206px,#c600ff 262px,#fd00ff 288px,#ff00c5 320px,#ff0096 358px,#ff006a 412px,#ff0043 488px,#ff0021 604px,#ff0016 658px,#ff0016 659px)"></i><i style="top:462px;background:linear-gradient(90deg,#003cff 0px,#0012ff 144px,#5500ff 200px,#ba00ff 256px,#ff00fd 290px,#ff00c9 318px,#ff0099 356px,#ff006d 408px,#ff0046 482px,#ff0024 594px,#ff0017 658px,#ff0017 659px)"></i><i style="top:465px;background:linear-gradient(90deg,#0039ff 0px,#020fff 144px,#4900ff 192px,#ae00ff 250px,#ff00fd 290px,#ff00ca 318px,#ff009a 356px,#ff006e 408px,#ff0046 484px,#ff0024 598px,#ff0018 658px,#ff0017 659px)"></i><i style="top:468px;background:linear-gradient(90deg,#0036ff 0px,#010dff 142px,#3e00ff 184px,#a300ff 244px,#ff00fe 290px,#ff00c7 320px,#ff0096 360px,#ff006b 414px,#ff0044 492px,#ff0022 610px,#ff0018 658px,#ff0018 659px)"></i><i style="top:471px;background:linear-gradient(90deg,#0033ff 0px,#020aff 142px,#3600ff 178px,#9d00ff 240px,#ff00fe 290px,#ff00c8 320px,#ff0097 360px,#ff006c 414px,#ff0045 492px,#ff0022 610px,#ff0019 658px,#ff0019 659px)"></i><i style="top:474px;background:linear-gradient(90deg,#0031ff 0px,#0108ff 140px,#2b00ff 170px,#8f00ff 232px,#f700ff 286px,#ff00fc 291px,#ff00c7 321px,#ff0097 361px,#ff006b 417px,#ff0044 497px,#ff0022 617px,#ff0019 659px)"></i><i style="top:477px;background:linear-gradient(90deg,#002eff 0px,#0006ff 138px,#2700ff 166px,#8c00ff 230px,#f700ff 286px,#ff00fd 291px,#ff00c8 321px,#ff0098 361px,#ff006c 417px,#ff0045 497px,#ff0022 617px,#ff001a 659px)"></i><i style="top:480px;background:linear-gradient(90deg,#002bff 0px,#0203ff 138px,#6500ff 206px,#ca00ff 264px,#ff00ff 290px,#ff00c7 322px,#ff0098 362px,#ff006c 418px,#ff0045 498px,#ff0023 618px,#ff001b 658px,#ff001b 659px)"></i><i style="top:483px;background:linear-gradient(90deg,#0029ff 0px,#0101ff 136px,#6200ff 204px,#ca00ff 264px,#fe00ff 290px,#ff00c8 322px,#ff0099 362px,#ff006d 418px,#ff0046 498px,#ff0023 618px,#ff001c 658px,#ff001b 659px)"></i><i style="top:486px;background:linear-gradient(90deg,#0026ff 0px,#0200ff 136px,#6600ff 206px,#ce00ff 266px,#fe00ff 290px,#ff00c6 324px,#ff0096 366px,#ff006a 424px,#ff0043 508px,#ff0021 634px,#ff001c 658px,#ff001c 659px)"></i><i style="top:489px;background:linear-gradient(90deg,#0024ff 0px,#0000ff 130px,#0600ff 138px,#6a00ff 208px,#d200ff 268px,#ff00fc 292px,#ff00c7 324px,#ff0097 366px,#ff006b 424px,#ff0044 508px,#ff0021 634px,#ff001d 658px,#ff001d 659px)"></i><i style="top:492px;background:linear-gradient(90deg,#0021ff 0px,#0000ff 122px,#0300ff 134px,#6500ff 204px,#cb00ff 264px,#ff00fd 292px,#ff00c7 324px,#ff0097 366px,#ff006c 424px,#ff0044 508px,#ff0022 634px,#ff001d 658px,#ff001d 659px)"></i><i style="top:495px;background:linear-gradient(90deg,#001fff 0px,#0000ff 116px,#0200ff 132px,#6600ff 204px,#ce00ff 266px,#ff00fd 292px,#ff00c8 324px,#ff0098 366px,#ff006d 424px,#ff0045 508px,#ff0023 634px,#ff001e 658px,#ff001e 659px)"></i><i style="top:498px;background:linear-gradient(90deg,#001cff 0px,#0000ff 108px,#0100ff 130px,#6400ff 202px,#cb00ff 264px,#ff00fe 292px,#ff00c9 324px,#ff0099 366px,#ff006d 424px,#ff0046 508px,#ff0023 634px,#ff001f 658px,#ff001f 659px)"></i><i style="top:501px;background:linear-gradient(90deg,#001aff 0px,#0000ff 100px,#0200ff 130px,#6400ff 202px,#cb00ff 264px,#ff00fe 292px,#ff00c9 324px,#ff009a 366px,#ff006e 424px,#ff0047 508px,#ff0024 634px,#ff001f 658px,#ff001f 659px)"></i><i style="top:504px;background:linear-gradient(90deg,#0018ff 0px,#0000ff 92px,#0100ff 128px,#6500ff 202px,#cb00ff 264px,#ff00ff 292px,#ff00ca 324px,#ff0099 368px,#ff006d 428px,#ff0045 514px,#ff0023 642px,#ff0020 658px,#ff0020 659px)"></i><i style="top:507px;background:linear-gradient(90deg,#0015ff 0px,#0000ff 84px,#0300ff 128px,#6600ff 202px,#cf00ff 266px,#ff00ff 292px,#ff00cb 324px,#ff0099 368px,#ff006d 428px,#ff0046 514px,#ff0024 642px,#ff0021 658px,#ff0020 659px)"></i><i style="top:510px;background:linear-gradient(90deg,#0013ff 0px,#0000ff 78px,#0200ff 126px,#6400ff 200px,#cb00ff 264px,#ff00ff 292px,#ff00c9 326px,#ff0098 370px,#ff006d 430px,#ff0046 516px,#ff0024 646px,#ff0021 658px,#ff0021 659px)"></i><i style="top:513px;background:linear-gradient(90deg,#0011ff 0px,#0000ff 70px,#0100ff 124px,#6200ff 198px,#c800ff 262px,#fe00ff 292px,#ff00c7 328px,#ff0096 374px,#ff006a 436px,#ff0043 526px,#ff0022 658px,#ff0022 659px)"></i><i style="top:516px;background:linear-gradient(90deg,#000eff 0px,#0000ff 62px,#0200ff 124px,#6600ff 200px,#cf00ff 266px,#fe00ff 292px,#ff00c5 330px,#ff0095 376px,#ff0069 440px,#ff0042 532px,#ff0022 658px,#ff0022 659px)"></i><i style="top:519px;background:linear-gradient(90deg,#000cff 0px,#0000ff 54px,#0100ff 122px,#6400ff 198px,#cb00ff 264px,#ff00fd 294px,#ff00c8 328px,#ff0097 374px,#ff006b 438px,#ff0044 528px,#ff0023 658px,#ff0023 659px)"></i><i style="top:522px;background:linear-gradient(90deg,#000bff 0px,#0000ff 50px,#0200ff 122px,#6400ff 198px,#cb00ff 264px,#ff00fd 294px,#ff00c8 328px,#ff0098 374px,#ff006b 438px,#ff0045 528px,#ff0024 658px,#ff0023 659px)"></i><i style="top:525px;background:linear-gradient(90deg,#000bff 0px,#0000ff 50px,#0200ff 122px,#6400ff 198px,#cb00ff 264px,#ff00fd 294px,#ff00c8 328px,#ff0098 374px,#ff006b 438px,#ff0045 528px,#ff0024 658px,#ff0023 659px)"></i></div></div><div class="b" style="left:1162.2px;top:145.8px;width:746.3px;height:1.5px;background:#9a9a9a"></div><div class="b" style="left:1907.0px;top:145.8px;width:1.5px;height:522.7px;background:#9a9a9a"></div><div class="b" style="left:1162.2px;top:145.8px;width:1.5px;height:528.9px;background:#9a9a9a"></div><div class="b" style="left:1162.2px;top:667.0px;width:746.3px;height:1.5px;background:#9a9a9a"></div><div class="t sb" style="left:1158.2px;top:678.4px;font-size:15.5px;line-height:15.5px;color:#ddd;font-weight:400;">0</div><div class="t sb" style="left:1147.4px;top:660.2px;font-size:15.5px;line-height:15.5px;color:#ddd;font-weight:400;">0</div><div class="b" style="left:1250.4px;top:667.8px;width:1.5px;height:6.0px;background:#9a9a9a"></div><div class="b" style="left:1157.0px;top:605.0px;width:6.0px;height:1.5px;background:#9a9a9a"></div><div class="t sb" style="left:1240.4px;top:678.4px;font-size:15.5px;line-height:15.5px;color:#ddd;font-weight:400;">0.1</div><div class="t sb" style="left:1134.5px;top:598.2px;font-size:15.5px;line-height:15.5px;color:#ddd;font-weight:400;">0.1</div><div class="b" style="left:1339.0px;top:667.8px;width:1.5px;height:6.0px;background:#9a9a9a"></div><div class="b" style="left:1157.0px;top:543.0px;width:6.0px;height:1.5px;background:#9a9a9a"></div><div class="t sb" style="left:1329.0px;top:678.4px;font-size:15.5px;line-height:15.5px;color:#ddd;font-weight:400;">0.2</div><div class="t sb" style="left:1134.5px;top:536.2px;font-size:15.5px;line-height:15.5px;color:#ddd;font-weight:400;">0.2</div><div class="b" style="left:1427.7px;top:667.8px;width:1.5px;height:6.0px;background:#9a9a9a"></div><div class="b" style="left:1157.0px;top:481.0px;width:6.0px;height:1.5px;background:#9a9a9a"></div><div class="t sb" style="left:1417.7px;top:678.4px;font-size:15.5px;line-height:15.5px;color:#ddd;font-weight:400;">0.3</div><div class="t sb" style="left:1134.5px;top:474.2px;font-size:15.5px;line-height:15.5px;color:#ddd;font-weight:400;">0.3</div><div class="b" style="left:1516.3px;top:667.8px;width:1.5px;height:6.0px;background:#9a9a9a"></div><div class="b" style="left:1157.0px;top:419.0px;width:6.0px;height:1.5px;background:#9a9a9a"></div><div class="t sb" style="left:1506.3px;top:678.4px;font-size:15.5px;line-height:15.5px;color:#ddd;font-weight:400;">0.4</div><div class="t sb" style="left:1134.5px;top:412.2px;font-size:15.5px;line-height:15.5px;color:#ddd;font-weight:400;">0.4</div><div class="b" style="left:1605.0px;top:667.8px;width:1.5px;height:6.0px;background:#9a9a9a"></div><div class="b" style="left:1157.0px;top:357.0px;width:6.0px;height:1.5px;background:#9a9a9a"></div><div class="t sb" style="left:1595.0px;top:678.4px;font-size:15.5px;line-height:15.5px;color:#ddd;font-weight:400;">0.5</div><div class="t sb" style="left:1134.5px;top:350.2px;font-size:15.5px;line-height:15.5px;color:#ddd;font-weight:400;">0.5</div><div class="b" style="left:1693.7px;top:667.8px;width:1.5px;height:6.0px;background:#9a9a9a"></div><div class="b" style="left:1157.0px;top:295.0px;width:6.0px;height:1.5px;background:#9a9a9a"></div><div class="t sb" style="left:1683.6px;top:678.4px;font-size:15.5px;line-height:15.5px;color:#ddd;font-weight:400;">0.6</div><div class="t sb" style="left:1134.5px;top:288.2px;font-size:15.5px;line-height:15.5px;color:#ddd;font-weight:400;">0.6</div><div class="b" style="left:1782.3px;top:667.8px;width:1.5px;height:6.0px;background:#9a9a9a"></div><div class="b" style="left:1157.0px;top:233.0px;width:6.0px;height:1.5px;background:#9a9a9a"></div><div class="t sb" style="left:1772.3px;top:678.4px;font-size:15.5px;line-height:15.5px;color:#ddd;font-weight:400;">0.7</div><div class="t sb" style="left:1134.5px;top:226.2px;font-size:15.5px;line-height:15.5px;color:#ddd;font-weight:400;">0.7</div><div class="b" style="left:1871.0px;top:667.8px;width:1.5px;height:6.0px;background:#9a9a9a"></div><div class="b" style="left:1157.0px;top:171.0px;width:6.0px;height:1.5px;background:#9a9a9a"></div><div class="t sb" style="left:1860.9px;top:678.4px;font-size:15.5px;line-height:15.5px;color:#ddd;font-weight:400;">0.8</div><div class="t sb" style="left:1134.5px;top:164.2px;font-size:15.5px;line-height:15.5px;color:#ddd;font-weight:400;">0.8</div><div class="b" style="left:1647.6px;top:152.4px;width:252.7px;height:197.8px;border:2px solid #9a9a9a;overflow:hidden;background:#fff"><div class="b rows" style="left:-4px;top:-4px;width:260px;height:205px;filter:blur(1.5px)"><i style="top:0px;background:linear-gradient(90deg,#5dffbd 0px,#b9ffb7 126px,#fffdb2 210px,#ffd694 260px)"></i><i style="top:3px;background:linear-gradient(90deg,#5effbf 0px,#bbffb9 126px,#fffdb4 208px,#ffd595 260px)"></i><i style="top:6px;background:linear-gradient(90deg,#5fffc0 0px,#bbffbb 124px,#ffffb7 204px,#ffd395 260px)"></i><i style="top:9px;background:linear-gradient(90deg,#60ffc2 0px,#bdffbd 124px,#fffeb9 202px,#ffd195 260px)"></i><i style="top:12px;background:linear-gradient(90deg,#61ffc4 0px,#beffbf 124px,#fffeba 200px,#ffd096 260px)"></i><i style="top:15px;background:linear-gradient(90deg,#62ffc6 0px,#beffc1 122px,#fffebc 198px,#ffce96 260px)"></i><i style="top:18px;background:linear-gradient(90deg,#64ffc7 0px,#c0ffc3 122px,#fffebe 196px,#ffcd98 258px,#ffcc97 260px)"></i><i style="top:21px;background:linear-gradient(90deg,#65ffc9 0px,#c2ffc4 122px,#fffdc0 194px,#ffcd99 256px,#ffca97 260px)"></i><i style="top:24px;background:linear-gradient(90deg,#66ffcb 0px,#c2ffc6 120px,#ffffc3 190px,#ffce9c 252px,#ffc997 260px)"></i><i style="top:27px;background:linear-gradient(90deg,#67ffcd 0px,#c4ffc8 120px,#fffec5 188px,#ffce9d 250px,#ffc798 260px)"></i><i style="top:30px;background:linear-gradient(90deg,#68ffce 0px,#c5ffca 120px,#fffec7 186px,#ffcd9f 248px,#ffc698 260px)"></i><i style="top:33px;background:linear-gradient(90deg,#69ffd0 0px,#c5ffcc 118px,#fffec9 184px,#ffcea1 244px,#ffc499 260px)"></i><i style="top:36px;background:linear-gradient(90deg,#6bffd2 0px,#c7ffce 118px,#fffecb 182px,#ffcea3 242px,#ffc299 260px)"></i><i style="top:39px;background:linear-gradient(90deg,#6cffd4 0px,#c9ffd0 118px,#fffdcd 180px,#ffcea4 240px,#ffc199 260px)"></i><i style="top:42px;background:linear-gradient(90deg,#6dffd6 0px,#cbffd2 118px,#fffdcf 178px,#ffcda6 238px,#ffbf9a 260px)"></i><i style="top:45px;background:linear-gradient(90deg,#6effd8 0px,#cbffd4 116px,#ffffd2 174px,#ffcea9 234px,#ffbd9a 260px)"></i><i style="top:48px;background:linear-gradient(90deg,#6fffd9 0px,#cdffd6 116px,#fffed4 172px,#ffceaa 232px,#ffbc9b 260px)"></i><i style="top:51px;background:linear-gradient(90deg,#71ffdb 0px,#ceffd8 116px,#fffed6 170px,#ffcdac 230px,#ffba9b 260px)"></i><i style="top:54px;background:linear-gradient(90deg,#72ffdd 0px,#cfffdb 114px,#fffed8 168px,#ffcdad 228px,#ffb99b 260px)"></i><i style="top:57px;background:linear-gradient(90deg,#73ffdf 0px,#d0ffdd 114px,#fffdda 166px,#ffcdaf 226px,#ffb79c 260px)"></i><i style="top:60px;background:linear-gradient(90deg,#75ffe1 0px,#d2ffdf 114px,#fffddc 164px,#ffccb0 224px,#ffb69c 260px)"></i><i style="top:63px;background:linear-gradient(90deg,#76ffe3 0px,#d3ffe1 112px,#ffffe0 160px,#ffcfb4 218px,#ffb49c 260px)"></i><i style="top:66px;background:linear-gradient(90deg,#77ffe5 0px,#d4ffe3 112px,#fffee2 158px,#ffceb6 216px,#ffb39d 260px)"></i><i style="top:69px;background:linear-gradient(90deg,#78ffe7 0px,#d6ffe5 112px,#fffee4 156px,#ffceb8 214px,#ffb19d 260px)"></i><i style="top:72px;background:linear-gradient(90deg,#7affe9 0px,#d7ffe8 110px,#fffee6 154px,#ffceb9 212px,#ffaf9e 260px)"></i><i style="top:75px;background:linear-gradient(90deg,#7bffeb 0px,#d9ffea 110px,#fffde8 152px,#ffcdbb 210px,#ffae9e 260px)"></i><i style="top:78px;background:linear-gradient(90deg,#7dffee 0px,#dbffec 110px,#fffdea 150px,#ffcdbd 208px,#ffac9e 260px)"></i><i style="top:81px;background:linear-gradient(90deg,#7efff0 0px,#dbffef 108px,#ffffee 146px,#ffcec0 204px,#ffab9f 260px)"></i><i style="top:84px;background:linear-gradient(90deg,#7ffff2 0px,#ddfff1 108px,#fffef0 144px,#ffcfc3 200px,#ffa99f 260px)"></i><i style="top:87px;background:linear-gradient(90deg,#81fff4 0px,#dffff3 108px,#fffef2 142px,#ffcfc4 198px,#ffa89f 260px)"></i><i style="top:90px;background:linear-gradient(90deg,#82fff6 0px,#dffff6 106px,#fffef4 140px,#ffcec6 196px,#ffa6a0 260px)"></i><i style="top:93px;background:linear-gradient(90deg,#84fff8 0px,#e1fff8 106px,#fffdf6 138px,#ffcec8 194px,#ffa5a0 260px)"></i><i style="top:96px;background:linear-gradient(90deg,#85fffb 0px,#e3fffb 106px,#fffdf9 136px,#ffcdca 192px,#ffa4a0 260px)"></i><i style="top:99px;background:linear-gradient(90deg,#87fffd 0px,#e5fffd 106px,#fffffd 132px,#ffcecd 188px,#ffa2a1 260px)"></i><i style="top:102px;background:linear-gradient(90deg,#88ffff 0px,#e7ffff 106px,#fffcfd 132px,#ffcdcd 188px,#ffa1a1 260px)"></i><i style="top:105px;background:linear-gradient(90deg,#88fcff 0px,#e7fcff 106px,#fffafd 132px,#ffcbcd 188px,#ff9fa1 260px)"></i><i style="top:108px;background:linear-gradient(90deg,#88faff 0px,#e7faff 106px,#fff8fd 132px,#ffc9ce 188px,#ff9ea2 260px)"></i><i style="top:111px;background:linear-gradient(90deg,#89f8ff 0px,#e7f7ff 106px,#fff5fd 132px,#ffc7ce 188px,#ff9ca2 260px)"></i><i style="top:114px;background:linear-gradient(90deg,#89f6ff 0px,#e7f5ff 106px,#fff3fe 132px,#ffc5ce 188px,#ff9ba3 260px)"></i><i style="top:117px;background:linear-gradient(90deg,#89f4ff 0px,#e7f2ff 106px,#fff1fe 132px,#ffc2cd 190px,#ff99a3 260px)"></i><i style="top:120px;background:linear-gradient(90deg,#89f1ff 0px,#e9f0ff 108px,#ffeffe 132px,#ffc0cd 190px,#ff98a3 260px)"></i><i style="top:123px;background:linear-gradient(90deg,#8aefff 0px,#e8eeff 108px,#ffecfe 132px,#ffbece 190px,#ff97a4 260px)"></i><i style="top:126px;background:linear-gradient(90deg,#8aedff 0px,#e8ebff 108px,#ffeafe 132px,#ffbdce 190px,#ff95a4 260px)"></i><i style="top:129px;background:linear-gradient(90deg,#8aebff 0px,#e8e9ff 108px,#ffe8ff 132px,#ffbbce 190px,#ff94a4 260px)"></i><i style="top:132px;background:linear-gradient(90deg,#8be9ff 0px,#e8e7ff 108px,#ffe4fd 134px,#ffb8cd 192px,#ff92a5 260px)"></i><i style="top:135px;background:linear-gradient(90deg,#8be7ff 0px,#eae4ff 110px,#ffe2fd 134px,#ffb6cd 192px,#ff91a5 260px)"></i><i style="top:138px;background:linear-gradient(90deg,#8be4ff 0px,#eae2ff 110px,#ffe0fd 134px,#ffb4ce 192px,#ff90a5 260px)"></i><i style="top:141px;background:linear-gradient(90deg,#8be2ff 0px,#eae0ff 110px,#ffdefd 134px,#ffb3ce 192px,#ff8ea6 260px)"></i><i style="top:144px;background:linear-gradient(90deg,#8ce0ff 0px,#eaddff 110px,#ffdbfe 134px,#ffb0cd 194px,#ff8da6 260px)"></i><i style="top:147px;background:linear-gradient(90deg,#8cdeff 0px,#eadbff 110px,#ffd9fe 134px,#ffaecd 194px,#ff8ca6 260px)"></i><i style="top:150px;background:linear-gradient(90deg,#8cdcff 0px,#ebd9ff 112px,#ffd7fe 134px,#ffaccd 194px,#ff8aa7 260px)"></i><i style="top:153px;background:linear-gradient(90deg,#8cdaff 0px,#ebd7ff 112px,#ffd5fe 134px,#ffabce 194px,#ff89a7 260px)"></i><i style="top:156px;background:linear-gradient(90deg,#8cd8ff 0px,#ebd4ff 112px,#ffd3fe 134px,#ffa9ce 194px,#ff88a7 260px)"></i><i style="top:159px;background:linear-gradient(90deg,#8dd6ff 0px,#ebd2ff 112px,#ffd1fe 134px,#ffa8ce 194px,#ff86a8 260px)"></i><i style="top:162px;background:linear-gradient(90deg,#8dd4ff 0px,#ebd0ff 112px,#ffcfff 134px,#ffa6cf 194px,#ff85a8 260px)"></i><i style="top:165px;background:linear-gradient(90deg,#8dd2ff 0px,#ebceff 112px,#ffcbfd 136px,#ffa3cd 196px,#ff84a8 260px)"></i><i style="top:168px;background:linear-gradient(90deg,#8dd0ff 0px,#edccff 114px,#ffc9fd 136px,#ffa0cc 198px,#ff82a9 260px)"></i><i style="top:171px;background:linear-gradient(90deg,#8eceff 0px,#edcaff 114px,#ffc7fd 136px,#ff9fcd 198px,#ff81a9 260px)"></i><i style="top:174px;background:linear-gradient(90deg,#8eccff 0px,#ecc8ff 114px,#ffc5fd 136px,#ff9dcd 198px,#ff80a9 260px)"></i><i style="top:177px;background:linear-gradient(90deg,#8ecaff 0px,#ecc6ff 114px,#ffc3fe 136px,#ff9ccd 198px,#ff7ea9 260px)"></i><i style="top:180px;background:linear-gradient(90deg,#8ec8ff 0px,#ecc3ff 114px,#ffc1fe 136px,#ff9acd 198px,#ff7daa 260px)"></i><i style="top:183px;background:linear-gradient(90deg,#8fc6ff 0px,#eec1ff 116px,#ffbffe 136px,#ff99ce 198px,#ff7caa 260px)"></i><i style="top:186px;background:linear-gradient(90deg,#8fc5ff 0px,#eebfff 116px,#ffbefe 136px,#ff97ce 198px,#ff7aaa 260px)"></i><i style="top:189px;background:linear-gradient(90deg,#8fc3ff 0px,#eebdff 116px,#ffbcfe 136px,#ff95ce 198px,#ff79ab 260px)"></i><i style="top:192px;background:linear-gradient(90deg,#8fc1ff 0px,#eebbff 116px,#ffbafe 136px,#ff94cf 198px,#ff78ab 260px)"></i><i style="top:195px;background:linear-gradient(90deg,#8fbfff 0px,#eeb9ff 116px,#ffb6fd 138px,#ff90cc 202px,#ff77ab 260px)"></i><i style="top:198px;background:linear-gradient(90deg,#90bdff 0px,#efb7ff 118px,#ffb5fd 138px,#ff8fcc 202px,#ff75ac 260px)"></i><i style="top:201px;background:linear-gradient(90deg,#90bbff 0px,#efb5ff 118px,#ffb3fd 138px,#ff8dcd 202px,#ff74ac 260px)"></i><i style="top:204px;background:linear-gradient(90deg,#90b9ff 0px,#efb3ff 118px,#ffb1fd 138px,#ff8ccd 202px,#ff73ac 260px)"></i></div></div><svg class="b" style="left:0;top:0" width="1920" height="1035"><rect x="1722.9" y="456.2" width="14.0" height="14.0" fill="none" stroke="#eee" stroke-width="2"/><rect x="1421.5" y="288.8" width="14.0" height="14.0" fill="none" stroke="#eee" stroke-width="2"/><rect x="1288.5" y="623.6" width="14.0" height="14.0" fill="none" stroke="#eee" stroke-width="2"/><rect x="1354.6" y="457.0" width="14.0" height="14.0" fill="none" stroke="#eee" stroke-width="2"/><rect x="1440.0" y="565.2" width="14.0" height="14.0" fill="none" stroke="#eee" stroke-width="2"/><rect x="1527.2" y="347.5" width="14.0" height="14.0" fill="none" stroke="#eee" stroke-width="2"/><rect x="1431.7" y="455.8" width="16.0" height="16.0" fill="none" stroke="#1a1a1a" stroke-width="2"/><circle cx="1749.9" cy="478.6" r="4.6" fill="#d80000" stroke="#5a0000" stroke-width="1.8"/><circle cx="1419.5" cy="292.6" r="4.6" fill="#00b000" stroke="#003a00" stroke-width="1.8"/><circle cx="1296.7" cy="630.4" r="4.6" fill="#0000c0" stroke="#000050" stroke-width="1.8"/><circle cx="1348.7" cy="486.8" r="4.6" fill="#00b4b4" stroke="#004444" stroke-width="1.8"/><circle cx="1377.5" cy="603.4" r="4.6" fill="#d000d0" stroke="#4a004a" stroke-width="1.8"/><circle cx="1538.6" cy="356.7" r="4.6" fill="#a8a800" stroke="#3a3a00" stroke-width="1.8"/><circle cx="1420.4" cy="481.2" r="4.6" fill="#fff" stroke="#333" stroke-width="1.8"/><rect x="1765.0" y="243.0" width="16.0" height="16.0" fill="none" stroke="#222" stroke-width="2"/><circle cx="1695" cy="327" r="5" fill="#bbb" stroke="#333" stroke-width="1.3"/><circle cx="1693" cy="333" r="5" fill="#fff" stroke="#333" stroke-width="1.3"/></svg><div class="b" style="left:1613.6px;top:634.0px;width:290.4px;height:30.3px;background:#2a2a2a"></div><div class="t sb" style="left:1614.0px;top:638.8px;font-size:21.5px;line-height:21.5px;color:#f2f2f2;font-weight:400;transform:scaleX(1.051);transform-origin:0 0;">Gamut Coverage:&nbsp; 99.3%</div><div class="t" style="left:18.0px;top:740.4px;font-size:32.0px;line-height:32.0px;color:#f2f2f2;font-weight:400;transform:scaleX(1.069);transform-origin:0 0;">Current Reading</div><div class="t" style="left:18.0px;top:790.3px;font-size:28.0px;line-height:28.0px;color:#f2f2f2;font-weight:400;">x: 0.29</div><div class="t" style="left:18.0px;top:833.2px;font-size:28.0px;line-height:28.0px;color:#f2f2f2;font-weight:400;transform:scaleX(1.020);transform-origin:0 0;">y: 0.2989</div><div class="t" style="left:18.0px;top:876.1px;font-size:28.0px;line-height:28.0px;color:#f2f2f2;font-weight:400;transform:scaleX(1.023);transform-origin:0 0;">fL: 69.11</div><div class="t" style="left:18.0px;top:919.0px;font-size:28.0px;line-height:28.0px;color:#f2f2f2;font-weight:400;transform:scaleX(1.066);transform-origin:0 0;">cd/m&sup2;: 236.78</div><div class="t sb" style="left:488.9px;top:728.5px;font-size:16.0px;line-height:16.0px;color:#ddd;font-weight:400;">RGB Balance</div><div class="b" style="left:407.6px;top:747.4px;width:290.6px;height:190.6px;background:#232323"></div><div class="b" style="left:401.6px;top:746.6px;width:296.6px;height:1.5px;background:#8c8c8c"></div><div class="t sb" style="left:383.9px;top:740.0px;font-size:15.0px;line-height:15.0px;color:#ddd;font-weight:400;">40</div><div class="b" style="left:401.6px;top:794.3px;width:296.6px;height:1.5px;background:#8c8c8c"></div><div class="t sb" style="left:383.9px;top:787.7px;font-size:15.0px;line-height:15.0px;color:#ddd;font-weight:400;">20</div><div class="b" style="left:401.6px;top:842.0px;width:296.6px;height:1.5px;background:#8c8c8c"></div><div class="t sb" style="left:392.3px;top:835.3px;font-size:15.0px;line-height:15.0px;color:#ddd;font-weight:400;">0</div><div class="b" style="left:401.6px;top:889.6px;width:296.6px;height:1.5px;background:#8c8c8c"></div><div class="t sb" style="left:378.9px;top:883.0px;font-size:15.0px;line-height:15.0px;color:#ddd;font-weight:400;">-20</div><div class="b" style="left:401.6px;top:937.2px;width:296.6px;height:1.5px;background:#8c8c8c"></div><div class="t sb" style="left:378.9px;top:930.6px;font-size:15.0px;line-height:15.0px;color:#ddd;font-weight:400;">-40</div><div class="b" style="left:406.9px;top:746.6px;width:1.5px;height:198.4px;background:#8c8c8c"></div><div class="b" style="left:697.5px;top:746.6px;width:1.5px;height:198.4px;background:#8c8c8c"></div><div class="t sb" style="left:533.0px;top:940.9px;font-size:15.5px;line-height:15.5px;color:#ddd;font-weight:400;">100W</div><div class="b" style="left:436.0px;top:841.7px;width:79.5px;height:23.8px;background:#0c0c0c"></div><div class="b" style="left:437.7px;top:842.7px;width:76.1px;height:21.1px;background:linear-gradient(#ff1010,#f00 55%,#a00000)"></div><div class="b" style="left:513.8px;top:841.7px;width:80.0px;height:3.0px;background:#0c0c0c"></div><div class="b" style="left:592.0px;top:764.5px;width:80.0px;height:79.7px;background:#0c0c0c"></div><div class="b" style="left:593.8px;top:766.0px;width:76.5px;height:76.7px;background:linear-gradient(#4848ff,#0000ff 35%,#0000e0 65%,#000070)"></div><div class="b" style="left:723.7px;top:722.6px;width:796.8px;height:20.3px;background:#2b2b2b"></div><div class="b" style="left:723.7px;top:742.9px;width:796.8px;height:19.8px;background:#161616"></div><div class="b" style="left:723.7px;top:722.6px;width:15.9px;height:40.1px;background:#050505"></div><div class="t" style="left:828.5px;top:733.4px;font-size:21.0px;line-height:21.0px;color:#f4f4f4;font-weight:400;transform:scaleX(0.880);transform-origin:0 0;">White</div><div class="t" style="left:919.0px;top:733.4px;font-size:21.0px;line-height:21.0px;color:#f4f4f4;font-weight:400;transform:scaleX(0.880);transform-origin:0 0;">Red</div><div class="t" style="left:999.3px;top:733.4px;font-size:21.0px;line-height:21.0px;color:#f4f4f4;font-weight:400;transform:scaleX(0.880);transform-origin:0 0;">Green</div><div class="t" style="left:1089.9px;top:733.4px;font-size:21.0px;line-height:21.0px;color:#f4f4f4;font-weight:400;transform:scaleX(0.880);transform-origin:0 0;">Blue</div><div class="t" style="left:1170.8px;top:733.4px;font-size:21.0px;line-height:21.0px;color:#f4f4f4;font-weight:400;transform:scaleX(0.880);transform-origin:0 0;">Cyan</div><div class="t" style="left:1262.0px;top:733.4px;font-size:21.0px;line-height:21.0px;color:#f4f4f4;font-weight:400;transform:scaleX(0.880);transform-origin:0 0;">Magenta</div><div class="t" style="left:1344.2px;top:733.4px;font-size:21.0px;line-height:21.0px;color:#f4f4f4;font-weight:400;transform:scaleX(0.880);transform-origin:0 0;">Yellow</div><div class="t" style="left:1434.8px;top:733.4px;font-size:21.0px;line-height:21.0px;color:#f4f4f4;font-weight:400;transform:scaleX(0.880);transform-origin:0 0;">100W</div><div class="b" style="left:739.6px;top:762.7px;width:780.9px;height:37.8px;background:#3d3d3d"></div><div class="b" style="left:723.7px;top:762.7px;width:15.9px;height:37.8px;background:#2a2a2a"></div><div class="t" style="left:745.0px;top:771.6px;font-size:24.5px;line-height:24.5px;color:#f4f4f4;font-weight:400;transform:scaleX(0.694);transform-origin:0 0;">x: CIE31</div><div class="t" style="left:828.5px;top:771.6px;font-size:24.5px;line-height:24.5px;color:#f4f4f4;font-weight:400;transform:scaleX(0.770);transform-origin:0 0;">0.2909</div><div class="t" style="left:919.0px;top:771.6px;font-size:24.5px;line-height:24.5px;color:#f4f4f4;font-weight:400;transform:scaleX(0.770);transform-origin:0 0;">0.6626</div><div class="t" style="left:999.3px;top:771.6px;font-size:24.5px;line-height:24.5px;color:#f4f4f4;font-weight:400;transform:scaleX(0.770);transform-origin:0 0;">0.2899</div><div class="t" style="left:1089.9px;top:771.6px;font-size:24.5px;line-height:24.5px;color:#f4f4f4;font-weight:400;transform:scaleX(0.770);transform-origin:0 0;">0.1514</div><div class="t" style="left:1170.8px;top:771.6px;font-size:24.5px;line-height:24.5px;color:#f4f4f4;font-weight:400;transform:scaleX(0.770);transform-origin:0 0;">0.2100</div><div class="t" style="left:1262.0px;top:771.6px;font-size:24.5px;line-height:24.5px;color:#f4f4f4;font-weight:400;transform:scaleX(0.770);transform-origin:0 0;">0.2425</div><div class="t" style="left:1344.2px;top:771.6px;font-size:24.5px;line-height:24.5px;color:#f4f4f4;font-weight:400;transform:scaleX(0.770);transform-origin:0 0;">0.4243</div><div class="t" style="left:1434.8px;top:771.6px;font-size:24.5px;line-height:24.5px;color:#f4f4f4;font-weight:400;transform:scaleX(0.770);transform-origin:0 0;">0.2900</div><div class="b" style="left:739.6px;top:800.5px;width:780.9px;height:40.1px;background:#737373"></div><div class="b" style="left:723.7px;top:800.5px;width:15.9px;height:40.1px;background:#2a2a2a"></div><div class="t" style="left:745.0px;top:809.4px;font-size:24.5px;line-height:24.5px;color:#f4f4f4;font-weight:400;transform:scaleX(0.694);transform-origin:0 0;">y: CIE31</div><div class="t" style="left:828.5px;top:809.4px;font-size:24.5px;line-height:24.5px;color:#f4f4f4;font-weight:400;transform:scaleX(0.770);transform-origin:0 0;">0.3010</div><div class="t" style="left:919.0px;top:809.4px;font-size:24.5px;line-height:24.5px;color:#f4f4f4;font-weight:400;transform:scaleX(0.770);transform-origin:0 0;">0.3051</div><div class="t" style="left:999.3px;top:809.4px;font-size:24.5px;line-height:24.5px;color:#f4f4f4;font-weight:400;transform:scaleX(0.770);transform-origin:0 0;">0.6051</div><div class="t" style="left:1089.9px;top:809.4px;font-size:24.5px;line-height:24.5px;color:#f4f4f4;font-weight:400;transform:scaleX(0.770);transform-origin:0 0;">0.0603</div><div class="t" style="left:1170.8px;top:809.4px;font-size:24.5px;line-height:24.5px;color:#f4f4f4;font-weight:400;transform:scaleX(0.770);transform-origin:0 0;">0.2919</div><div class="t" style="left:1262.0px;top:809.4px;font-size:24.5px;line-height:24.5px;color:#f4f4f4;font-weight:400;transform:scaleX(0.770);transform-origin:0 0;">0.1039</div><div class="t" style="left:1344.2px;top:809.4px;font-size:24.5px;line-height:24.5px;color:#f4f4f4;font-weight:400;transform:scaleX(0.770);transform-origin:0 0;">0.5018</div><div class="t" style="left:1434.8px;top:809.4px;font-size:24.5px;line-height:24.5px;color:#f4f4f4;font-weight:400;transform:scaleX(0.770);transform-origin:0 0;">0.2989</div><div class="b" style="left:739.6px;top:840.6px;width:780.9px;height:38.7px;background:#3d3d3d"></div><div class="b" style="left:723.7px;top:840.6px;width:15.9px;height:38.7px;background:#2a2a2a"></div><div class="t" style="left:745.0px;top:849.5px;font-size:24.5px;line-height:24.5px;color:#f4f4f4;font-weight:400;transform:scaleX(0.760);transform-origin:0 0;">Y</div><div class="t" style="left:828.5px;top:849.5px;font-size:24.5px;line-height:24.5px;color:#f4f4f4;font-weight:400;transform:scaleX(0.770);transform-origin:0 0;">140.9143</div><div class="t" style="left:919.0px;top:849.5px;font-size:24.5px;line-height:24.5px;color:#f4f4f4;font-weight:400;transform:scaleX(0.770);transform-origin:0 0;">29.8826</div><div class="t" style="left:999.3px;top:849.5px;font-size:24.5px;line-height:24.5px;color:#f4f4f4;font-weight:400;transform:scaleX(0.770);transform-origin:0 0;">129.4900</div><div class="t" style="left:1089.9px;top:849.5px;font-size:24.5px;line-height:24.5px;color:#f4f4f4;font-weight:400;transform:scaleX(0.770);transform-origin:0 0;">20.5256</div><div class="t" style="left:1170.8px;top:849.5px;font-size:24.5px;line-height:24.5px;color:#f4f4f4;font-weight:400;transform:scaleX(0.770);transform-origin:0 0;">144.8287</div><div class="t" style="left:1262.0px;top:849.5px;font-size:24.5px;line-height:24.5px;color:#f4f4f4;font-weight:400;transform:scaleX(0.770);transform-origin:0 0;">42.2424</div><div class="t" style="left:1344.2px;top:849.5px;font-size:24.5px;line-height:24.5px;color:#f4f4f4;font-weight:400;transform:scaleX(0.770);transform-origin:0 0;">127.3518</div><div class="t" style="left:1434.8px;top:849.5px;font-size:24.5px;line-height:24.5px;color:#f4f4f4;font-weight:400;transform:scaleX(0.770);transform-origin:0 0;">236.7767</div><div class="b" style="left:739.6px;top:879.3px;width:780.9px;height:38.6px;background:#737373"></div><div class="b" style="left:723.7px;top:879.3px;width:15.9px;height:38.6px;background:#2a2a2a"></div><div class="t" style="left:745.0px;top:888.2px;font-size:24.5px;line-height:24.5px;color:#f4f4f4;font-weight:400;transform:scaleX(0.758);transform-origin:0 0;">Target Y</div><div class="t" style="left:828.5px;top:888.2px;font-size:24.5px;line-height:24.5px;color:#f4f4f4;font-weight:400;transform:scaleX(0.770);transform-origin:0 0;">140.9143</div><div class="t" style="left:919.0px;top:888.2px;font-size:24.5px;line-height:24.5px;color:#f4f4f4;font-weight:400;transform:scaleX(0.770);transform-origin:0 0;">29.9663</div><div class="t" style="left:999.3px;top:888.2px;font-size:24.5px;line-height:24.5px;color:#f4f4f4;font-weight:400;transform:scaleX(0.770);transform-origin:0 0;">100.7760</div><div class="t" style="left:1089.9px;top:888.2px;font-size:24.5px;line-height:24.5px;color:#f4f4f4;font-weight:400;transform:scaleX(0.770);transform-origin:0 0;">10.1720</div><div class="t" style="left:1170.8px;top:888.2px;font-size:24.5px;line-height:24.5px;color:#f4f4f4;font-weight:400;transform:scaleX(0.770);transform-origin:0 0;">110.9480</div><div class="t" style="left:1262.0px;top:888.2px;font-size:24.5px;line-height:24.5px;color:#f4f4f4;font-weight:400;transform:scaleX(0.770);transform-origin:0 0;">40.1382</div><div class="t" style="left:1344.2px;top:888.2px;font-size:24.5px;line-height:24.5px;color:#f4f4f4;font-weight:400;transform:scaleX(0.770);transform-origin:0 0;">130.7423</div><div class="t" style="left:1434.8px;top:888.2px;font-size:24.5px;line-height:24.5px;color:#f4f4f4;font-weight:400;transform:scaleX(0.770);transform-origin:0 0;">236.7767</div><div class="b" style="left:739.6px;top:917.9px;width:780.9px;height:37.4px;background:#3d3d3d"></div><div class="b" style="left:723.7px;top:917.9px;width:15.9px;height:37.4px;background:#2a2a2a"></div><div class="t" style="left:745.0px;top:926.8px;font-size:24.5px;line-height:24.5px;color:#f4f4f4;font-weight:400;transform:scaleX(0.758);transform-origin:0 0;">&Delta;E 2000</div><div class="t" style="left:828.5px;top:926.8px;font-size:24.5px;line-height:24.5px;color:#f4f4f4;font-weight:400;transform:scaleX(0.770);transform-origin:0 0;">10.1794</div><div class="t" style="left:919.0px;top:926.8px;font-size:24.5px;line-height:24.5px;color:#f4f4f4;font-weight:400;transform:scaleX(0.770);transform-origin:0 0;">4.8445</div><div class="t" style="left:999.3px;top:926.8px;font-size:24.5px;line-height:24.5px;color:#f4f4f4;font-weight:400;transform:scaleX(0.770);transform-origin:0 0;">6.0155</div><div class="t" style="left:1089.9px;top:926.8px;font-size:24.5px;line-height:24.5px;color:#f4f4f4;font-weight:400;transform:scaleX(0.770);transform-origin:0 0;">9.3773</div><div class="t" style="left:1170.8px;top:926.8px;font-size:24.5px;line-height:24.5px;color:#f4f4f4;font-weight:400;transform:scaleX(0.770);transform-origin:0 0;">10.5491</div><div class="t" style="left:1262.0px;top:926.8px;font-size:24.5px;line-height:24.5px;color:#f4f4f4;font-weight:400;transform:scaleX(0.770);transform-origin:0 0;">9.3377</div><div class="t" style="left:1344.2px;top:926.8px;font-size:24.5px;line-height:24.5px;color:#f4f4f4;font-weight:400;transform:scaleX(0.770);transform-origin:0 0;">1.4321</div><div class="t" style="left:1434.8px;top:926.8px;font-size:24.5px;line-height:24.5px;color:#f4f4f4;font-weight:400;transform:scaleX(0.770);transform-origin:0 0;">12.2929</div><div class="b" style="left:0.0px;top:963.0px;width:1920.0px;height:72.0px;background:linear-gradient(#2c2c2c,#1f1f1f)"></div><div class="b" style="left:0.0px;top:962.0px;width:1920.0px;height:2.0px;background:#222"></div><div class="b" style="left:2.0px;top:965.6px;width:167.8px;height:70.4px;background:linear-gradient(#9a9a9a,#7c7c7c 12%,#6e6e6e 60%,#4e4e4e);border-radius:5px 5px 0 0;border:1px solid #555"></div><div class="b" style="left:9.0px;top:973.4px;width:155.3px;height:38.1px;background:#c4c4c4;border-radius:3px;box-shadow:0 0 0 1px #777"></div><div class="t" style="left:69.6px;top:1019.5px;font-size:12.0px;line-height:12.0px;color:#1c1c1c;font-weight:700;">White</div><div class="b" style="left:173.0px;top:965.6px;width:167.8px;height:70.4px;background:linear-gradient(#9a9a9a,#7c7c7c 12%,#6e6e6e 60%,#4e4e4e);border-radius:5px 5px 0 0;border:1px solid #555"></div><div class="b" style="left:180.0px;top:973.4px;width:155.3px;height:38.1px;background:#c00000;border-radius:3px;box-shadow:0 0 0 1px #777"></div><div class="t" style="left:245.6px;top:1019.5px;font-size:12.0px;line-height:12.0px;color:#1c1c1c;font-weight:700;">Red</div><div class="b" style="left:344.0px;top:965.6px;width:167.8px;height:70.4px;background:linear-gradient(#9a9a9a,#7c7c7c 12%,#6e6e6e 60%,#4e4e4e);border-radius:5px 5px 0 0;border:1px solid #555"></div><div class="b" style="left:351.0px;top:973.4px;width:155.3px;height:38.1px;background:#00c000;border-radius:3px;box-shadow:0 0 0 1px #777"></div><div class="t" style="left:410.6px;top:1019.5px;font-size:12.0px;line-height:12.0px;color:#1c1c1c;font-weight:700;">Green</div><div class="b" style="left:515.0px;top:965.6px;width:167.8px;height:70.4px;background:linear-gradient(#9a9a9a,#7c7c7c 12%,#6e6e6e 60%,#4e4e4e);border-radius:5px 5px 0 0;border:1px solid #555"></div><div class="b" style="left:522.0px;top:973.4px;width:155.3px;height:38.1px;background:#0000c0;border-radius:3px;box-shadow:0 0 0 1px #777"></div><div class="t" style="left:585.9px;top:1019.5px;font-size:12.0px;line-height:12.0px;color:#1c1c1c;font-weight:700;">Blue</div><div class="b" style="left:686.0px;top:965.6px;width:167.8px;height:70.4px;background:linear-gradient(#9a9a9a,#7c7c7c 12%,#6e6e6e 60%,#4e4e4e);border-radius:5px 5px 0 0;border:1px solid #555"></div><div class="b" style="left:693.0px;top:973.4px;width:155.3px;height:38.1px;background:#00c0c0;border-radius:3px;box-shadow:0 0 0 1px #777"></div><div class="t" style="left:755.2px;top:1019.5px;font-size:12.0px;line-height:12.0px;color:#1c1c1c;font-weight:700;">Cyan</div><div class="b" style="left:857.0px;top:965.6px;width:167.8px;height:70.4px;background:linear-gradient(#9a9a9a,#7c7c7c 12%,#6e6e6e 60%,#4e4e4e);border-radius:5px 5px 0 0;border:1px solid #555"></div><div class="b" style="left:864.0px;top:973.4px;width:155.3px;height:38.1px;background:#c000c0;border-radius:3px;box-shadow:0 0 0 1px #777"></div><div class="t" style="left:916.6px;top:1019.5px;font-size:12.0px;line-height:12.0px;color:#1c1c1c;font-weight:700;">Magenta</div><div class="b" style="left:1028.0px;top:965.6px;width:167.8px;height:70.4px;background:linear-gradient(#9a9a9a,#7c7c7c 12%,#6e6e6e 60%,#4e4e4e);border-radius:5px 5px 0 0;border:1px solid #555"></div><div class="b" style="left:1035.0px;top:973.4px;width:155.3px;height:38.1px;background:#c4c400;border-radius:3px;box-shadow:0 0 0 1px #777"></div><div class="t" style="left:1093.2px;top:1019.5px;font-size:12.0px;line-height:12.0px;color:#1c1c1c;font-weight:700;">Yellow</div><div class="b" style="left:1198.0px;top:965.6px;width:169.0px;height:70.4px;background:#262626;border-radius:5px 5px 0 0"></div><div class="b" style="left:1203.5px;top:970.6px;width:158.5px;height:41.4px;background:#fff;border-radius:4px"></div><div class="t" style="left:1267.3px;top:1018.8px;font-size:12.0px;line-height:12.0px;color:#fff;font-weight:700;">100W</div><div class="b" style="left:1556.7px;top:965.4px;width:54.1px;height:20.3px;background:linear-gradient(#bdbdbd,#9a9a9a 45%,#7a7a7a);border-radius:4px 4px 0 0;border-right:1px solid #3a3a3a"></div><div class="b" style="left:1556.7px;top:986.7px;width:54.1px;height:49.3px;background:linear-gradient(#bdbdbd,#9a9a9a 45%,#7a7a7a);border-radius:0;border-right:1px solid #3a3a3a"></div><div class="b" style="left:1556.7px;top:985.7px;width:54.1px;height:1.0px;background:#555"></div><div class="b" style="left:1567px;top:993.5px;width:33.4px;height:33.4px;border:4px solid #111;border-radius:5px;background:linear-gradient(#ddd,#bbb)"></div><div class="b" style="left:1576.0px;top:1003.0px;width:16.0px;height:15.0px;background:#000"></div><div class="b" style="left:1573px;top:966px;width:22px;height:18px;border-radius:50%;background:radial-gradient(#8a8a8a 55%,#aaa 75%,transparent 80%)"></div><svg class="b" style="left:1576px;top:968px" width="16" height="12"><path d="M3,8 L8,3 L13,8Z" fill="#222"/></svg><div class="b" style="left:1613.0px;top:965.4px;width:50.7px;height:32.8px;background:linear-gradient(#bdbdbd,#9a9a9a 45%,#7a7a7a);border-radius:4px 0 0 0;border-right:1px solid #3a3a3a"></div><div class="b" style="left:1627.0px;top:971px;width:22px;height:22px;border-radius:50%;background:radial-gradient(#8a8a8a 55%,#aaa 75%,transparent 80%)"></div><div class="b" style="left:1663.7px;top:965.4px;width:50.7px;height:32.8px;background:linear-gradient(#bdbdbd,#9a9a9a 45%,#7a7a7a);border-radius:0;border-right:1px solid #3a3a3a"></div><div class="b" style="left:1677.7px;top:971px;width:22px;height:22px;border-radius:50%;background:radial-gradient(#8a8a8a 55%,#aaa 75%,transparent 80%)"></div><div class="b" style="left:1714.4px;top:965.4px;width:50.7px;height:32.8px;background:linear-gradient(#bdbdbd,#9a9a9a 45%,#7a7a7a);border-radius:0;border-right:1px solid #3a3a3a"></div><div class="b" style="left:1728.4px;top:971px;width:22px;height:22px;border-radius:50%;background:radial-gradient(#8a8a8a 55%,#aaa 75%,transparent 80%)"></div><div class="b" style="left:1765.1px;top:965.4px;width:50.7px;height:32.8px;background:linear-gradient(#bdbdbd,#9a9a9a 45%,#7a7a7a);border-radius:0;border-right:1px solid #3a3a3a"></div><div class="b" style="left:1779.1px;top:971px;width:22px;height:22px;border-radius:50%;background:radial-gradient(#8a8a8a 55%,#aaa 75%,transparent 80%)"></div><div class="b" style="left:1815.8px;top:965.4px;width:50.7px;height:32.8px;background:linear-gradient(#bdbdbd,#9a9a9a 45%,#7a7a7a);border-radius:0 4px 0 0;border-right:1px solid #3a3a3a"></div><div class="b" style="left:1829.8px;top:971px;width:22px;height:22px;border-radius:50%;background:radial-gradient(#8a8a8a 55%,#aaa 75%,transparent 80%)"></div><svg class="b" style="left:1626.0px;top:970px" width="24" height="24" viewBox="-12 -12 24 24"><rect x="-4" y="-4" width="8" height="8" fill="#222"/></svg><svg class="b" style="left:1676.7px;top:970px" width="24" height="24" viewBox="-12 -12 24 24"><path d="M-3,-5 L5,0 L-3,5Z" fill="#222"/></svg><svg class="b" style="left:1727.4px;top:970px" width="24" height="24" viewBox="-12 -12 24 24"><path d="M-5,-6 L-6.5,-6 L-6.5,6 L-5,6 M5,-6 L6.5,-6 L6.5,6 L5,6" stroke="#222" stroke-width="2" fill="none"/><rect x="-2" y="-1" width="1.5" height="1.5" fill="#222"/><rect x="1" y="-1" width="1.5" height="1.5" fill="#222"/></svg><svg class="b" style="left:1778.1px;top:970px" width="24" height="24" viewBox="-12 -12 24 24"><path d="M0,0 C-2,-4 -7,-4 -7,0 C-7,4 -2,4 0,0 C2,-4 7,-4 7,0 C7,4 2,4 0,0Z" stroke="#222" stroke-width="2" fill="none"/></svg><svg class="b" style="left:1828.8px;top:970px" width="24" height="24" viewBox="-12 -12 24 24"><path d="M-5,-1 A5,5 0 0 1 4,-3 M5,1 A5,5 0 0 1 -4,3" stroke="#222" stroke-width="2.2" fill="none"/><path d="M2,-6 L6,-3 L2,-1Z M-2,6 L-6,3 L-2,1Z" fill="#222"/></svg><div class="b" style="left:1867.0px;top:965.4px;width:51.0px;height:32.8px;background:#2a2a2a"></div><div class="b" style="left:1882px;top:971px;width:22px;height:22px;border-radius:50%;background:radial-gradient(#252525 55%,#303030 75%)"></div><div class="b" style="left:1613.0px;top:1000.3px;width:152.3px;height:35.7px;background:linear-gradient(#bdbdbd,#9a9a9a 45%,#7a7a7a);border-radius:4px 0 0 0;border-right:1px solid #3a3a3a"></div><div class="b" style="left:1765.3px;top:1000.3px;width:152.7px;height:35.7px;background:linear-gradient(#bdbdbd,#9a9a9a 45%,#7a7a7a);border-radius:0 4px 0 0;border-right:1px solid #3a3a3a"></div><div class="t" style="left:1677.5px;top:1004.4px;font-size:26.0px;line-height:26.0px;color:#2a2a2a;font-weight:700;transform:scaleX(0.933);transform-origin:0 0;">Back</div><div class="t" style="left:1797.6px;top:1004.4px;font-size:26.0px;line-height:26.0px;color:#2a2a2a;font-weight:700;transform:scaleX(1.020);transform-origin:0 0;">Next</div><div class="b" style="left:1636px;top:1007px;width:22px;height:22px;border-radius:50%;background:radial-gradient(#9a9a9a 55%,#bbb 75%,transparent 80%)"></div><div class="b" style="left:1876px;top:1007px;width:22px;height:22px;border-radius:50%;background:radial-gradient(#9a9a9a 55%,#bbb 75%,transparent 80%)"></div><div class="t" style="left:1641.4px;top:1008.1px;font-size:20.0px;line-height:20.0px;color:#333;font-weight:700;">&laquo;</div><div class="t" style="left:1881.4px;top:1008.1px;font-size:20.0px;line-height:20.0px;color:#333;font-weight:700;">&raquo;</div><div class="b" style="left:0.0px;top:1033.0px;width:1920.0px;height:2.0px;background:#3a3a3a;opacity:.6"></div></body></html>
